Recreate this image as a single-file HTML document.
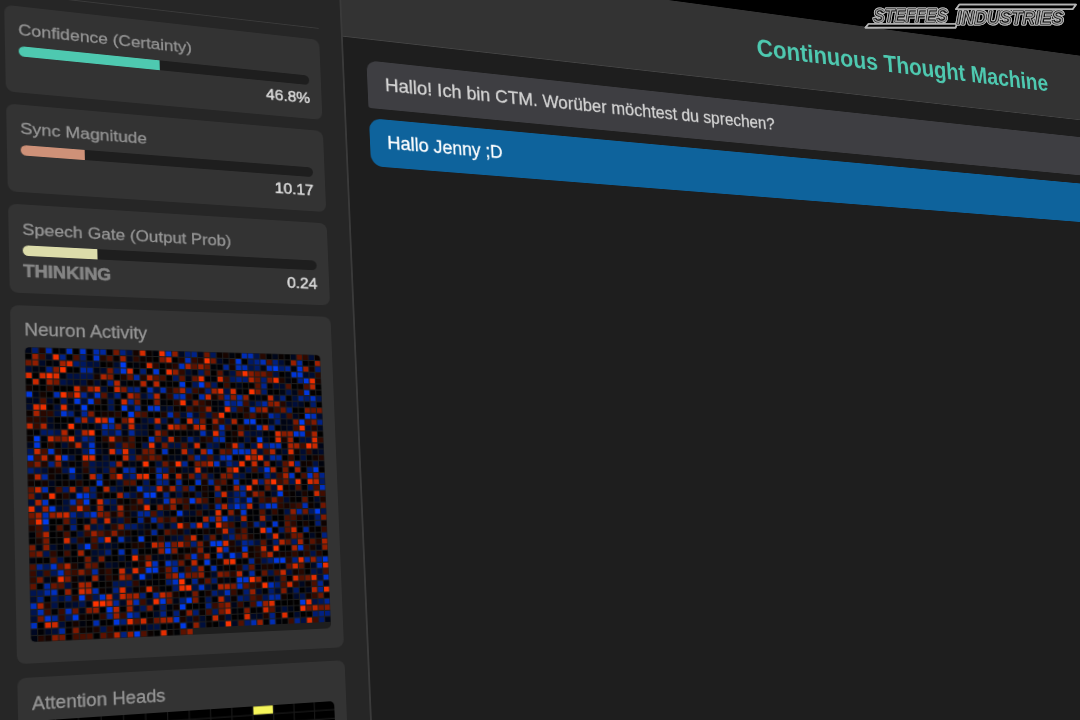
<!DOCTYPE html>
<html><head><meta charset="utf-8"><style>
html,body{margin:0;padding:0;width:1080px;height:720px;overflow:hidden;background:#000}
#scr{filter:blur(0.4px);position:absolute;left:0;top:0;width:1560px;height:960px;transform-origin:0 0;transform:matrix3d(1.05082415,0.11849124,0,0.000260192014,0.0177969558,0.926562031,0,-6.33659565e-05,0,0,1,0,-31.2582552,-94.4912077,0,1);background:#1e1e1e;font-family:"Liberation Sans",sans-serif;overflow:hidden}
#scr div{position:absolute}
.card{left:31.9px;width:326.2px;background:#333333;border-radius:8px}
.lbl{font-size:17.4px;color:#969696;-webkit-text-stroke:0.3px #969696;line-height:0;white-space:nowrap}
.val{font-size:17px;-webkit-text-stroke:0.55px #d8d8d8;color:#d8d8d8;line-height:0;white-space:nowrap;text-align:right}
.track{width:300px;height:11px;border-radius:5.5px;background:#1e1e1e;overflow:hidden}
.fill{position:absolute;left:0;top:0;height:11px}
</style></head><body>
<div id="scr">
<div id="side" style="left:0;top:0;width:383.3px;height:960px;background:#262626"></div>
<div style="left:383.3px;top:0;width:2px;height:960px;background:#3a3a3a"></div>
<div id="hdr" style="left:385.3px;top:0;width:1200px;height:94.5px;background:#333333"></div>
<div style="left:385.3px;top:94.5px;width:1200px;height:1.4px;background:#444444"></div>
<div style="left:918.9px;top:47.5px;font-size:32.8px;font-weight:bold;color:#4ec9b0;line-height:0;white-space:nowrap">Continuous Thought Machine</div>
<div style="left:31.9px;top:88.8px;width:326.2px;height:1.5px;background:#3a3a3a"></div>
<div style="left:410.8px;top:121.3px;width:1400px;height:55.3px;background:#3e3e42;border-radius:12px 12px 12px 3px"></div>
<div style="left:431.2px;top:148.4px;font-size:21.75px;color:#d4d4d4;-webkit-text-stroke:0.35px #d4d4d4;line-height:0;white-space:nowrap">Hallo! Ich bin CTM. Worüber möchtest du sprechen?</div>
<div style="left:410.8px;top:188.8px;width:1400px;height:56.1px;background:#0e639c;border-radius:14px 14px 3px 14px"></div>
<div style="left:430.9px;top:216.1px;font-size:21.2px;color:#ffffff;-webkit-text-stroke:0.35px #ffffff;line-height:0;white-space:nowrap">Hallo Jenny ;D</div>
<div class="card" style="top:102.8px;height:93.3px"></div>
<div class="lbl" style="left:45.0px;top:128.3px;font-size:17.4px">Confidence (Certainty)</div>
<div class="track" style="left:45.0px;top:145.8px"><div class="fill" style="width:140.4px;background:#4ec9b0"></div></div>
<div class="val" style="right:1215.0px;top:172.7px">46.8%</div>
<div class="card" style="top:208.9px;height:93.3px"></div>
<div class="lbl" style="left:45.0px;top:234.4px;font-size:17.4px">Sync Magnitude</div>
<div class="track" style="left:45.0px;top:251.9px"><div class="fill" style="width:62.1px;background:#ce9178"></div></div>
<div class="val" style="right:1215.0px;top:278.8px">10.17</div>
<div class="card" style="top:315.0px;height:93.3px"></div>
<div class="lbl" style="left:45.0px;top:340.6px;font-size:17.15px">Speech Gate (Output Prob)</div>
<div class="track" style="left:45.0px;top:358.0px"><div class="fill" style="width:72.0px;background:#dcdcaa"></div></div>
<div class="val" style="right:1215.0px;top:384.9px">0.24</div><div style="left:45.0px;top:384.9px;font-size:17.6px;font-weight:bold;color:#858585;-webkit-text-stroke:0.6px #858585;line-height:0;white-space:nowrap">THINKING</div>
<div class="card" style="top:421.0px;height:363.9px"></div>
<div class="lbl" style="left:45.0px;top:446.3px;font-size:17.9px">Neuron Activity</div>
<div style="left:45.0px;top:464.4px;width:300px;height:300px;background:#1e1e1e;border-radius:5px;overflow:hidden"><svg width="300" height="300" viewBox="0 0 300 300" style="position:absolute;left:0;top:0"><rect x="0.55" y="0.55" width="5.42" height="5.42" fill="#000619"/><rect x="7.07" y="0.55" width="5.42" height="5.42" fill="#001c70"/><rect x="13.59" y="0.55" width="5.42" height="5.42" fill="#1d0500"/><rect x="20.12" y="0.55" width="5.42" height="5.42" fill="#002bae"/><rect x="26.64" y="0.55" width="5.42" height="5.42" fill="#020000"/><rect x="33.16" y="0.55" width="5.42" height="5.42" fill="#00030d"/><rect x="39.68" y="0.55" width="5.42" height="5.42" fill="#002fbb"/><rect x="46.20" y="0.55" width="5.42" height="5.42" fill="#000000"/><rect x="52.72" y="0.55" width="5.42" height="5.42" fill="#0033ce"/><rect x="59.25" y="0.55" width="5.42" height="5.42" fill="#000002"/><rect x="65.77" y="0.55" width="5.42" height="5.42" fill="#002cb0"/><rect x="72.29" y="0.55" width="5.42" height="5.42" fill="#00279f"/><rect x="78.81" y="0.55" width="5.42" height="5.42" fill="#000003"/><rect x="85.33" y="0.55" width="5.42" height="5.42" fill="#781800"/><rect x="91.85" y="0.55" width="5.42" height="5.42" fill="#002184"/><rect x="98.38" y="0.55" width="5.42" height="5.42" fill="#001144"/><rect x="104.90" y="0.55" width="5.42" height="5.42" fill="#150400"/><rect x="111.42" y="0.55" width="5.42" height="5.42" fill="#d72b00"/><rect x="117.94" y="0.55" width="5.42" height="5.42" fill="#090100"/><rect x="124.46" y="0.55" width="5.42" height="5.42" fill="#000107"/><rect x="130.98" y="0.55" width="5.42" height="5.42" fill="#f13000"/><rect x="137.51" y="0.55" width="5.42" height="5.42" fill="#0031c6"/><rect x="144.03" y="0.55" width="5.42" height="5.42" fill="#8e1c00"/><rect x="150.55" y="0.55" width="5.42" height="5.42" fill="#000925"/><rect x="157.07" y="0.55" width="5.42" height="5.42" fill="#001d75"/><rect x="163.59" y="0.55" width="5.42" height="5.42" fill="#002289"/><rect x="170.12" y="0.55" width="5.42" height="5.42" fill="#00071e"/><rect x="176.64" y="0.55" width="5.42" height="5.42" fill="#711600"/><rect x="183.16" y="0.55" width="5.42" height="5.42" fill="#00175c"/><rect x="189.68" y="0.55" width="5.42" height="5.42" fill="#0a0200"/><rect x="196.20" y="0.55" width="5.42" height="5.42" fill="#190500"/><rect x="202.72" y="0.55" width="5.42" height="5.42" fill="#00030c"/><rect x="209.25" y="0.55" width="5.42" height="5.42" fill="#040000"/><rect x="215.77" y="0.55" width="5.42" height="5.42" fill="#002db7"/><rect x="222.29" y="0.55" width="5.42" height="5.42" fill="#002eba"/><rect x="228.81" y="0.55" width="5.42" height="5.42" fill="#00134d"/><rect x="235.33" y="0.55" width="5.42" height="5.42" fill="#280800"/><rect x="241.85" y="0.55" width="5.42" height="5.42" fill="#000003"/><rect x="248.38" y="0.55" width="5.42" height="5.42" fill="#00071c"/><rect x="254.90" y="0.55" width="5.42" height="5.42" fill="#0a0200"/><rect x="261.42" y="0.55" width="5.42" height="5.42" fill="#000001"/><rect x="267.94" y="0.55" width="5.42" height="5.42" fill="#000821"/><rect x="274.46" y="0.55" width="5.42" height="5.42" fill="#631300"/><rect x="280.98" y="0.55" width="5.42" height="5.42" fill="#300900"/><rect x="287.51" y="0.55" width="5.42" height="5.42" fill="#000e39"/><rect x="294.03" y="0.55" width="5.42" height="5.42" fill="#080100"/><rect x="0.55" y="7.07" width="5.42" height="5.42" fill="#010000"/><rect x="7.07" y="7.07" width="5.42" height="5.42" fill="#9b1f00"/><rect x="13.59" y="7.07" width="5.42" height="5.42" fill="#3e0c00"/><rect x="20.12" y="7.07" width="5.42" height="5.42" fill="#000926"/><rect x="26.64" y="7.07" width="5.42" height="5.42" fill="#f53100"/><rect x="33.16" y="7.07" width="5.42" height="5.42" fill="#002288"/><rect x="39.68" y="7.07" width="5.42" height="5.42" fill="#000104"/><rect x="46.20" y="7.07" width="5.42" height="5.42" fill="#4d0f00"/><rect x="52.72" y="7.07" width="5.42" height="5.42" fill="#001c70"/><rect x="59.25" y="7.07" width="5.42" height="5.42" fill="#000000"/><rect x="65.77" y="7.07" width="5.42" height="5.42" fill="#0033cd"/><rect x="72.29" y="7.07" width="5.42" height="5.42" fill="#230700"/><rect x="78.81" y="7.07" width="5.42" height="5.42" fill="#511000"/><rect x="85.33" y="7.07" width="5.42" height="5.42" fill="#080100"/><rect x="91.85" y="7.07" width="5.42" height="5.42" fill="#9b1f00"/><rect x="98.38" y="7.07" width="5.42" height="5.42" fill="#00071c"/><rect x="104.90" y="7.07" width="5.42" height="5.42" fill="#2e0900"/><rect x="111.42" y="7.07" width="5.42" height="5.42" fill="#0c0200"/><rect x="117.94" y="7.07" width="5.42" height="5.42" fill="#090100"/><rect x="124.46" y="7.07" width="5.42" height="5.42" fill="#000000"/><rect x="130.98" y="7.07" width="5.42" height="5.42" fill="#811900"/><rect x="137.51" y="7.07" width="5.42" height="5.42" fill="#d42a00"/><rect x="144.03" y="7.07" width="5.42" height="5.42" fill="#000000"/><rect x="150.55" y="7.07" width="5.42" height="5.42" fill="#220600"/><rect x="157.07" y="7.07" width="5.42" height="5.42" fill="#002eb9"/><rect x="163.59" y="7.07" width="5.42" height="5.42" fill="#310900"/><rect x="170.12" y="7.07" width="5.42" height="5.42" fill="#1c0500"/><rect x="176.64" y="7.07" width="5.42" height="5.42" fill="#ff3300"/><rect x="183.16" y="7.07" width="5.42" height="5.42" fill="#751700"/><rect x="189.68" y="7.07" width="5.42" height="5.42" fill="#000927"/><rect x="196.20" y="7.07" width="5.42" height="5.42" fill="#000209"/><rect x="202.72" y="7.07" width="5.42" height="5.42" fill="#240700"/><rect x="209.25" y="7.07" width="5.42" height="5.42" fill="#0037dd"/><rect x="215.77" y="7.07" width="5.42" height="5.42" fill="#000000"/><rect x="222.29" y="7.07" width="5.42" height="5.42" fill="#001965"/><rect x="228.81" y="7.07" width="5.42" height="5.42" fill="#002289"/><rect x="235.33" y="7.07" width="5.42" height="5.42" fill="#002eba"/><rect x="241.85" y="7.07" width="5.42" height="5.42" fill="#531000"/><rect x="248.38" y="7.07" width="5.42" height="5.42" fill="#002080"/><rect x="254.90" y="7.07" width="5.42" height="5.42" fill="#000d37"/><rect x="261.42" y="7.07" width="5.42" height="5.42" fill="#000208"/><rect x="267.94" y="7.07" width="5.42" height="5.42" fill="#981e00"/><rect x="274.46" y="7.07" width="5.42" height="5.42" fill="#002aa7"/><rect x="280.98" y="7.07" width="5.42" height="5.42" fill="#000001"/><rect x="287.51" y="7.07" width="5.42" height="5.42" fill="#040000"/><rect x="294.03" y="7.07" width="5.42" height="5.42" fill="#a12000"/><rect x="0.55" y="13.59" width="5.42" height="5.42" fill="#731700"/><rect x="7.07" y="13.59" width="5.42" height="5.42" fill="#921d00"/><rect x="13.59" y="13.59" width="5.42" height="5.42" fill="#000a29"/><rect x="20.12" y="13.59" width="5.42" height="5.42" fill="#000104"/><rect x="26.64" y="13.59" width="5.42" height="5.42" fill="#00030f"/><rect x="33.16" y="13.59" width="5.42" height="5.42" fill="#a22000"/><rect x="39.68" y="13.59" width="5.42" height="5.42" fill="#e02c00"/><rect x="46.20" y="13.59" width="5.42" height="5.42" fill="#001c70"/><rect x="52.72" y="13.59" width="5.42" height="5.42" fill="#00185f"/><rect x="59.25" y="13.59" width="5.42" height="5.42" fill="#000f3f"/><rect x="65.77" y="13.59" width="5.42" height="5.42" fill="#000f3e"/><rect x="72.29" y="13.59" width="5.42" height="5.42" fill="#000000"/><rect x="78.81" y="13.59" width="5.42" height="5.42" fill="#0b0200"/><rect x="85.33" y="13.59" width="5.42" height="5.42" fill="#000c30"/><rect x="91.85" y="13.59" width="5.42" height="5.42" fill="#003cf0"/><rect x="98.38" y="13.59" width="5.42" height="5.42" fill="#000104"/><rect x="104.90" y="13.59" width="5.42" height="5.42" fill="#00030c"/><rect x="111.42" y="13.59" width="5.42" height="5.42" fill="#070100"/><rect x="117.94" y="13.59" width="5.42" height="5.42" fill="#dc2c00"/><rect x="124.46" y="13.59" width="5.42" height="5.42" fill="#2c0800"/><rect x="130.98" y="13.59" width="5.42" height="5.42" fill="#000000"/><rect x="137.51" y="13.59" width="5.42" height="5.42" fill="#130300"/><rect x="144.03" y="13.59" width="5.42" height="5.42" fill="#270700"/><rect x="150.55" y="13.59" width="5.42" height="5.42" fill="#0030bf"/><rect x="157.07" y="13.59" width="5.42" height="5.42" fill="#ae2200"/><rect x="163.59" y="13.59" width="5.42" height="5.42" fill="#5a1200"/><rect x="170.12" y="13.59" width="5.42" height="5.42" fill="#9a1e00"/><rect x="176.64" y="13.59" width="5.42" height="5.42" fill="#651400"/><rect x="183.16" y="13.59" width="5.42" height="5.42" fill="#000208"/><rect x="189.68" y="13.59" width="5.42" height="5.42" fill="#000107"/><rect x="196.20" y="13.59" width="5.42" height="5.42" fill="#002594"/><rect x="202.72" y="13.59" width="5.42" height="5.42" fill="#180400"/><rect x="209.25" y="13.59" width="5.42" height="5.42" fill="#002eb7"/><rect x="215.77" y="13.59" width="5.42" height="5.42" fill="#002cb3"/><rect x="222.29" y="13.59" width="5.42" height="5.42" fill="#00134c"/><rect x="228.81" y="13.59" width="5.42" height="5.42" fill="#001a69"/><rect x="235.33" y="13.59" width="5.42" height="5.42" fill="#000514"/><rect x="241.85" y="13.59" width="5.42" height="5.42" fill="#0030c0"/><rect x="248.38" y="13.59" width="5.42" height="5.42" fill="#003df4"/><rect x="254.90" y="13.59" width="5.42" height="5.42" fill="#001c70"/><rect x="261.42" y="13.59" width="5.42" height="5.42" fill="#002596"/><rect x="267.94" y="13.59" width="5.42" height="5.42" fill="#00030e"/><rect x="274.46" y="13.59" width="5.42" height="5.42" fill="#0036da"/><rect x="280.98" y="13.59" width="5.42" height="5.42" fill="#9a1e00"/><rect x="287.51" y="13.59" width="5.42" height="5.42" fill="#120300"/><rect x="294.03" y="13.59" width="5.42" height="5.42" fill="#001c72"/><rect x="0.55" y="20.12" width="5.42" height="5.42" fill="#000d35"/><rect x="7.07" y="20.12" width="5.42" height="5.42" fill="#000412"/><rect x="13.59" y="20.12" width="5.42" height="5.42" fill="#00030e"/><rect x="20.12" y="20.12" width="5.42" height="5.42" fill="#002185"/><rect x="26.64" y="20.12" width="5.42" height="5.42" fill="#871b00"/><rect x="33.16" y="20.12" width="5.42" height="5.42" fill="#ff3300"/><rect x="39.68" y="20.12" width="5.42" height="5.42" fill="#000000"/><rect x="46.20" y="20.12" width="5.42" height="5.42" fill="#000000"/><rect x="52.72" y="20.12" width="5.42" height="5.42" fill="#0028a3"/><rect x="59.25" y="20.12" width="5.42" height="5.42" fill="#002595"/><rect x="65.77" y="20.12" width="5.42" height="5.42" fill="#000413"/><rect x="72.29" y="20.12" width="5.42" height="5.42" fill="#000b2f"/><rect x="78.81" y="20.12" width="5.42" height="5.42" fill="#791800"/><rect x="85.33" y="20.12" width="5.42" height="5.42" fill="#001a69"/><rect x="91.85" y="20.12" width="5.42" height="5.42" fill="#0037dc"/><rect x="98.38" y="20.12" width="5.42" height="5.42" fill="#da2b00"/><rect x="104.90" y="20.12" width="5.42" height="5.42" fill="#010000"/><rect x="111.42" y="20.12" width="5.42" height="5.42" fill="#001d73"/><rect x="117.94" y="20.12" width="5.42" height="5.42" fill="#030000"/><rect x="124.46" y="20.12" width="5.42" height="5.42" fill="#0036d8"/><rect x="130.98" y="20.12" width="5.42" height="5.42" fill="#010000"/><rect x="137.51" y="20.12" width="5.42" height="5.42" fill="#f33000"/><rect x="144.03" y="20.12" width="5.42" height="5.42" fill="#921d00"/><rect x="150.55" y="20.12" width="5.42" height="5.42" fill="#2f0900"/><rect x="157.07" y="20.12" width="5.42" height="5.42" fill="#000c31"/><rect x="163.59" y="20.12" width="5.42" height="5.42" fill="#00030d"/><rect x="170.12" y="20.12" width="5.42" height="5.42" fill="#001965"/><rect x="176.64" y="20.12" width="5.42" height="5.42" fill="#551100"/><rect x="183.16" y="20.12" width="5.42" height="5.42" fill="#020000"/><rect x="189.68" y="20.12" width="5.42" height="5.42" fill="#5a1200"/><rect x="196.20" y="20.12" width="5.42" height="5.42" fill="#000517"/><rect x="202.72" y="20.12" width="5.42" height="5.42" fill="#001144"/><rect x="209.25" y="20.12" width="5.42" height="5.42" fill="#6e1600"/><rect x="215.77" y="20.12" width="5.42" height="5.42" fill="#fa3200"/><rect x="222.29" y="20.12" width="5.42" height="5.42" fill="#8a1b00"/><rect x="228.81" y="20.12" width="5.42" height="5.42" fill="#6a1500"/><rect x="235.33" y="20.12" width="5.42" height="5.42" fill="#721600"/><rect x="241.85" y="20.12" width="5.42" height="5.42" fill="#440d00"/><rect x="248.38" y="20.12" width="5.42" height="5.42" fill="#001042"/><rect x="254.90" y="20.12" width="5.42" height="5.42" fill="#010000"/><rect x="261.42" y="20.12" width="5.42" height="5.42" fill="#000410"/><rect x="267.94" y="20.12" width="5.42" height="5.42" fill="#0035d7"/><rect x="274.46" y="20.12" width="5.42" height="5.42" fill="#0036d8"/><rect x="280.98" y="20.12" width="5.42" height="5.42" fill="#000a29"/><rect x="287.51" y="20.12" width="5.42" height="5.42" fill="#000c32"/><rect x="294.03" y="20.12" width="5.42" height="5.42" fill="#2d0900"/><rect x="0.55" y="26.64" width="5.42" height="5.42" fill="#df2c00"/><rect x="7.07" y="26.64" width="5.42" height="5.42" fill="#000001"/><rect x="13.59" y="26.64" width="5.42" height="5.42" fill="#ce2900"/><rect x="20.12" y="26.64" width="5.42" height="5.42" fill="#fd3200"/><rect x="26.64" y="26.64" width="5.42" height="5.42" fill="#de2c00"/><rect x="33.16" y="26.64" width="5.42" height="5.42" fill="#00030d"/><rect x="39.68" y="26.64" width="5.42" height="5.42" fill="#001145"/><rect x="46.20" y="26.64" width="5.42" height="5.42" fill="#001042"/><rect x="52.72" y="26.64" width="5.42" height="5.42" fill="#001453"/><rect x="59.25" y="26.64" width="5.42" height="5.42" fill="#00134e"/><rect x="65.77" y="26.64" width="5.42" height="5.42" fill="#140400"/><rect x="72.29" y="26.64" width="5.42" height="5.42" fill="#af2300"/><rect x="78.81" y="26.64" width="5.42" height="5.42" fill="#811900"/><rect x="85.33" y="26.64" width="5.42" height="5.42" fill="#000000"/><rect x="91.85" y="26.64" width="5.42" height="5.42" fill="#1e0600"/><rect x="98.38" y="26.64" width="5.42" height="5.42" fill="#661400"/><rect x="104.90" y="26.64" width="5.42" height="5.42" fill="#0029a4"/><rect x="111.42" y="26.64" width="5.42" height="5.42" fill="#210600"/><rect x="117.94" y="26.64" width="5.42" height="5.42" fill="#b62400"/><rect x="124.46" y="26.64" width="5.42" height="5.42" fill="#5b1200"/><rect x="130.98" y="26.64" width="5.42" height="5.42" fill="#490e00"/><rect x="137.51" y="26.64" width="5.42" height="5.42" fill="#000000"/><rect x="144.03" y="26.64" width="5.42" height="5.42" fill="#00175e"/><rect x="150.55" y="26.64" width="5.42" height="5.42" fill="#601300"/><rect x="157.07" y="26.64" width="5.42" height="5.42" fill="#000516"/><rect x="163.59" y="26.64" width="5.42" height="5.42" fill="#671400"/><rect x="170.12" y="26.64" width="5.42" height="5.42" fill="#ed2f00"/><rect x="176.64" y="26.64" width="5.42" height="5.42" fill="#000107"/><rect x="183.16" y="26.64" width="5.42" height="5.42" fill="#000106"/><rect x="189.68" y="26.64" width="5.42" height="5.42" fill="#d62a00"/><rect x="196.20" y="26.64" width="5.42" height="5.42" fill="#3c0c00"/><rect x="202.72" y="26.64" width="5.42" height="5.42" fill="#001963"/><rect x="209.25" y="26.64" width="5.42" height="5.42" fill="#002082"/><rect x="215.77" y="26.64" width="5.42" height="5.42" fill="#001c70"/><rect x="222.29" y="26.64" width="5.42" height="5.42" fill="#b22300"/><rect x="228.81" y="26.64" width="5.42" height="5.42" fill="#6a1500"/><rect x="235.33" y="26.64" width="5.42" height="5.42" fill="#001d74"/><rect x="241.85" y="26.64" width="5.42" height="5.42" fill="#781800"/><rect x="248.38" y="26.64" width="5.42" height="5.42" fill="#f53100"/><rect x="254.90" y="26.64" width="5.42" height="5.42" fill="#1f0600"/><rect x="261.42" y="26.64" width="5.42" height="5.42" fill="#000411"/><rect x="267.94" y="26.64" width="5.42" height="5.42" fill="#040000"/><rect x="274.46" y="26.64" width="5.42" height="5.42" fill="#001f7f"/><rect x="280.98" y="26.64" width="5.42" height="5.42" fill="#0039e5"/><rect x="287.51" y="26.64" width="5.42" height="5.42" fill="#ec2f00"/><rect x="294.03" y="26.64" width="5.42" height="5.42" fill="#1d0500"/><rect x="0.55" y="33.16" width="5.42" height="5.42" fill="#010000"/><rect x="7.07" y="33.16" width="5.42" height="5.42" fill="#cb2800"/><rect x="13.59" y="33.16" width="5.42" height="5.42" fill="#000002"/><rect x="20.12" y="33.16" width="5.42" height="5.42" fill="#981e00"/><rect x="26.64" y="33.16" width="5.42" height="5.42" fill="#771700"/><rect x="33.16" y="33.16" width="5.42" height="5.42" fill="#00124a"/><rect x="39.68" y="33.16" width="5.42" height="5.42" fill="#000d35"/><rect x="46.20" y="33.16" width="5.42" height="5.42" fill="#000924"/><rect x="52.72" y="33.16" width="5.42" height="5.42" fill="#000e3b"/><rect x="59.25" y="33.16" width="5.42" height="5.42" fill="#0b0200"/><rect x="65.77" y="33.16" width="5.42" height="5.42" fill="#000c32"/><rect x="72.29" y="33.16" width="5.42" height="5.42" fill="#000104"/><rect x="78.81" y="33.16" width="5.42" height="5.42" fill="#001f7f"/><rect x="85.33" y="33.16" width="5.42" height="5.42" fill="#b72400"/><rect x="91.85" y="33.16" width="5.42" height="5.42" fill="#000410"/><rect x="98.38" y="33.16" width="5.42" height="5.42" fill="#000000"/><rect x="104.90" y="33.16" width="5.42" height="5.42" fill="#0a0200"/><rect x="111.42" y="33.16" width="5.42" height="5.42" fill="#b22300"/><rect x="117.94" y="33.16" width="5.42" height="5.42" fill="#000104"/><rect x="124.46" y="33.16" width="5.42" height="5.42" fill="#bd2500"/><rect x="130.98" y="33.16" width="5.42" height="5.42" fill="#000000"/><rect x="137.51" y="33.16" width="5.42" height="5.42" fill="#020000"/><rect x="144.03" y="33.16" width="5.42" height="5.42" fill="#010000"/><rect x="150.55" y="33.16" width="5.42" height="5.42" fill="#0038e1"/><rect x="157.07" y="33.16" width="5.42" height="5.42" fill="#000002"/><rect x="163.59" y="33.16" width="5.42" height="5.42" fill="#00165b"/><rect x="170.12" y="33.16" width="5.42" height="5.42" fill="#003cf0"/><rect x="176.64" y="33.16" width="5.42" height="5.42" fill="#661400"/><rect x="183.16" y="33.16" width="5.42" height="5.42" fill="#001862"/><rect x="189.68" y="33.16" width="5.42" height="5.42" fill="#000000"/><rect x="196.20" y="33.16" width="5.42" height="5.42" fill="#3c0c00"/><rect x="202.72" y="33.16" width="5.42" height="5.42" fill="#050100"/><rect x="209.25" y="33.16" width="5.42" height="5.42" fill="#000618"/><rect x="215.77" y="33.16" width="5.42" height="5.42" fill="#010000"/><rect x="222.29" y="33.16" width="5.42" height="5.42" fill="#050100"/><rect x="228.81" y="33.16" width="5.42" height="5.42" fill="#5d1200"/><rect x="235.33" y="33.16" width="5.42" height="5.42" fill="#002492"/><rect x="241.85" y="33.16" width="5.42" height="5.42" fill="#060100"/><rect x="248.38" y="33.16" width="5.42" height="5.42" fill="#000d37"/><rect x="254.90" y="33.16" width="5.42" height="5.42" fill="#000a2a"/><rect x="261.42" y="33.16" width="5.42" height="5.42" fill="#561100"/><rect x="267.94" y="33.16" width="5.42" height="5.42" fill="#000000"/><rect x="274.46" y="33.16" width="5.42" height="5.42" fill="#060100"/><rect x="280.98" y="33.16" width="5.42" height="5.42" fill="#4f0f00"/><rect x="287.51" y="33.16" width="5.42" height="5.42" fill="#b92500"/><rect x="294.03" y="33.16" width="5.42" height="5.42" fill="#000001"/><rect x="0.55" y="39.68" width="5.42" height="5.42" fill="#110300"/><rect x="7.07" y="39.68" width="5.42" height="5.42" fill="#000000"/><rect x="13.59" y="39.68" width="5.42" height="5.42" fill="#000000"/><rect x="20.12" y="39.68" width="5.42" height="5.42" fill="#2d0900"/><rect x="26.64" y="39.68" width="5.42" height="5.42" fill="#000001"/><rect x="33.16" y="39.68" width="5.42" height="5.42" fill="#020000"/><rect x="39.68" y="39.68" width="5.42" height="5.42" fill="#000000"/><rect x="46.20" y="39.68" width="5.42" height="5.42" fill="#d22a00"/><rect x="52.72" y="39.68" width="5.42" height="5.42" fill="#300900"/><rect x="59.25" y="39.68" width="5.42" height="5.42" fill="#9c1f00"/><rect x="65.77" y="39.68" width="5.42" height="5.42" fill="#d22a00"/><rect x="72.29" y="39.68" width="5.42" height="5.42" fill="#000c32"/><rect x="78.81" y="39.68" width="5.42" height="5.42" fill="#060100"/><rect x="85.33" y="39.68" width="5.42" height="5.42" fill="#d32a00"/><rect x="91.85" y="39.68" width="5.42" height="5.42" fill="#811900"/><rect x="98.38" y="39.68" width="5.42" height="5.42" fill="#001e7a"/><rect x="104.90" y="39.68" width="5.42" height="5.42" fill="#002186"/><rect x="111.42" y="39.68" width="5.42" height="5.42" fill="#000001"/><rect x="117.94" y="39.68" width="5.42" height="5.42" fill="#002bae"/><rect x="124.46" y="39.68" width="5.42" height="5.42" fill="#000e3b"/><rect x="130.98" y="39.68" width="5.42" height="5.42" fill="#002bae"/><rect x="137.51" y="39.68" width="5.42" height="5.42" fill="#240700"/><rect x="144.03" y="39.68" width="5.42" height="5.42" fill="#5c1200"/><rect x="150.55" y="39.68" width="5.42" height="5.42" fill="#ac2200"/><rect x="157.07" y="39.68" width="5.42" height="5.42" fill="#001b6e"/><rect x="163.59" y="39.68" width="5.42" height="5.42" fill="#380b00"/><rect x="170.12" y="39.68" width="5.42" height="5.42" fill="#200600"/><rect x="176.64" y="39.68" width="5.42" height="5.42" fill="#001d76"/><rect x="183.16" y="39.68" width="5.42" height="5.42" fill="#a12000"/><rect x="189.68" y="39.68" width="5.42" height="5.42" fill="#e92e00"/><rect x="196.20" y="39.68" width="5.42" height="5.42" fill="#001146"/><rect x="202.72" y="39.68" width="5.42" height="5.42" fill="#db2b00"/><rect x="209.25" y="39.68" width="5.42" height="5.42" fill="#000107"/><rect x="215.77" y="39.68" width="5.42" height="5.42" fill="#000000"/><rect x="222.29" y="39.68" width="5.42" height="5.42" fill="#fe3200"/><rect x="228.81" y="39.68" width="5.42" height="5.42" fill="#7c1800"/><rect x="235.33" y="39.68" width="5.42" height="5.42" fill="#001a69"/><rect x="241.85" y="39.68" width="5.42" height="5.42" fill="#000002"/><rect x="248.38" y="39.68" width="5.42" height="5.42" fill="#000000"/><rect x="254.90" y="39.68" width="5.42" height="5.42" fill="#000514"/><rect x="261.42" y="39.68" width="5.42" height="5.42" fill="#001553"/><rect x="267.94" y="39.68" width="5.42" height="5.42" fill="#00061a"/><rect x="274.46" y="39.68" width="5.42" height="5.42" fill="#3b0b00"/><rect x="280.98" y="39.68" width="5.42" height="5.42" fill="#0038e0"/><rect x="287.51" y="39.68" width="5.42" height="5.42" fill="#050100"/><rect x="294.03" y="39.68" width="5.42" height="5.42" fill="#000001"/><rect x="0.55" y="46.20" width="5.42" height="5.42" fill="#0038e1"/><rect x="7.07" y="46.20" width="5.42" height="5.42" fill="#000516"/><rect x="13.59" y="46.20" width="5.42" height="5.42" fill="#140400"/><rect x="20.12" y="46.20" width="5.42" height="5.42" fill="#000000"/><rect x="26.64" y="46.20" width="5.42" height="5.42" fill="#002db5"/><rect x="33.16" y="46.20" width="5.42" height="5.42" fill="#fa3200"/><rect x="39.68" y="46.20" width="5.42" height="5.42" fill="#5f1300"/><rect x="46.20" y="46.20" width="5.42" height="5.42" fill="#ed2f00"/><rect x="52.72" y="46.20" width="5.42" height="5.42" fill="#002593"/><rect x="59.25" y="46.20" width="5.42" height="5.42" fill="#000b2f"/><rect x="65.77" y="46.20" width="5.42" height="5.42" fill="#0033cc"/><rect x="72.29" y="46.20" width="5.42" height="5.42" fill="#591100"/><rect x="78.81" y="46.20" width="5.42" height="5.42" fill="#000b2d"/><rect x="85.33" y="46.20" width="5.42" height="5.42" fill="#002080"/><rect x="91.85" y="46.20" width="5.42" height="5.42" fill="#000003"/><rect x="98.38" y="46.20" width="5.42" height="5.42" fill="#b82400"/><rect x="104.90" y="46.20" width="5.42" height="5.42" fill="#731700"/><rect x="111.42" y="46.20" width="5.42" height="5.42" fill="#000c32"/><rect x="117.94" y="46.20" width="5.42" height="5.42" fill="#001c71"/><rect x="124.46" y="46.20" width="5.42" height="5.42" fill="#be2600"/><rect x="130.98" y="46.20" width="5.42" height="5.42" fill="#070100"/><rect x="137.51" y="46.20" width="5.42" height="5.42" fill="#310900"/><rect x="144.03" y="46.20" width="5.42" height="5.42" fill="#0028a0"/><rect x="150.55" y="46.20" width="5.42" height="5.42" fill="#002fbc"/><rect x="157.07" y="46.20" width="5.42" height="5.42" fill="#2b0800"/><rect x="163.59" y="46.20" width="5.42" height="5.42" fill="#000003"/><rect x="170.12" y="46.20" width="5.42" height="5.42" fill="#002bae"/><rect x="176.64" y="46.20" width="5.42" height="5.42" fill="#cf2900"/><rect x="183.16" y="46.20" width="5.42" height="5.42" fill="#180400"/><rect x="189.68" y="46.20" width="5.42" height="5.42" fill="#671400"/><rect x="196.20" y="46.20" width="5.42" height="5.42" fill="#0029a4"/><rect x="202.72" y="46.20" width="5.42" height="5.42" fill="#8d1c00"/><rect x="209.25" y="46.20" width="5.42" height="5.42" fill="#002db3"/><rect x="215.77" y="46.20" width="5.42" height="5.42" fill="#911d00"/><rect x="222.29" y="46.20" width="5.42" height="5.42" fill="#000001"/><rect x="228.81" y="46.20" width="5.42" height="5.42" fill="#000514"/><rect x="235.33" y="46.20" width="5.42" height="5.42" fill="#040000"/><rect x="241.85" y="46.20" width="5.42" height="5.42" fill="#c52700"/><rect x="248.38" y="46.20" width="5.42" height="5.42" fill="#000b2e"/><rect x="254.90" y="46.20" width="5.42" height="5.42" fill="#002080"/><rect x="261.42" y="46.20" width="5.42" height="5.42" fill="#010000"/><rect x="267.94" y="46.20" width="5.42" height="5.42" fill="#000f3c"/><rect x="274.46" y="46.20" width="5.42" height="5.42" fill="#00248f"/><rect x="280.98" y="46.20" width="5.42" height="5.42" fill="#001a69"/><rect x="287.51" y="46.20" width="5.42" height="5.42" fill="#0030c2"/><rect x="294.03" y="46.20" width="5.42" height="5.42" fill="#001450"/><rect x="0.55" y="52.72" width="5.42" height="5.42" fill="#00071d"/><rect x="7.07" y="52.72" width="5.42" height="5.42" fill="#00071f"/><rect x="13.59" y="52.72" width="5.42" height="5.42" fill="#4e0f00"/><rect x="20.12" y="52.72" width="5.42" height="5.42" fill="#000925"/><rect x="26.64" y="52.72" width="5.42" height="5.42" fill="#000000"/><rect x="33.16" y="52.72" width="5.42" height="5.42" fill="#00175e"/><rect x="39.68" y="52.72" width="5.42" height="5.42" fill="#000412"/><rect x="46.20" y="52.72" width="5.42" height="5.42" fill="#0038e1"/><rect x="52.72" y="52.72" width="5.42" height="5.42" fill="#000d36"/><rect x="59.25" y="52.72" width="5.42" height="5.42" fill="#0039e4"/><rect x="65.77" y="52.72" width="5.42" height="5.42" fill="#400c00"/><rect x="72.29" y="52.72" width="5.42" height="5.42" fill="#040000"/><rect x="78.81" y="52.72" width="5.42" height="5.42" fill="#001557"/><rect x="85.33" y="52.72" width="5.42" height="5.42" fill="#000000"/><rect x="91.85" y="52.72" width="5.42" height="5.42" fill="#cc2800"/><rect x="98.38" y="52.72" width="5.42" height="5.42" fill="#002492"/><rect x="104.90" y="52.72" width="5.42" height="5.42" fill="#731700"/><rect x="111.42" y="52.72" width="5.42" height="5.42" fill="#000002"/><rect x="117.94" y="52.72" width="5.42" height="5.42" fill="#000000"/><rect x="124.46" y="52.72" width="5.42" height="5.42" fill="#7d1900"/><rect x="130.98" y="52.72" width="5.42" height="5.42" fill="#000208"/><rect x="137.51" y="52.72" width="5.42" height="5.42" fill="#000000"/><rect x="144.03" y="52.72" width="5.42" height="5.42" fill="#2b0800"/><rect x="150.55" y="52.72" width="5.42" height="5.42" fill="#f73100"/><rect x="157.07" y="52.72" width="5.42" height="5.42" fill="#000413"/><rect x="163.59" y="52.72" width="5.42" height="5.42" fill="#7c1800"/><rect x="170.12" y="52.72" width="5.42" height="5.42" fill="#340a00"/><rect x="176.64" y="52.72" width="5.42" height="5.42" fill="#180400"/><rect x="183.16" y="52.72" width="5.42" height="5.42" fill="#000106"/><rect x="189.68" y="52.72" width="5.42" height="5.42" fill="#000412"/><rect x="196.20" y="52.72" width="5.42" height="5.42" fill="#002fbe"/><rect x="202.72" y="52.72" width="5.42" height="5.42" fill="#002080"/><rect x="209.25" y="52.72" width="5.42" height="5.42" fill="#002cb0"/><rect x="215.77" y="52.72" width="5.42" height="5.42" fill="#440d00"/><rect x="222.29" y="52.72" width="5.42" height="5.42" fill="#000d33"/><rect x="228.81" y="52.72" width="5.42" height="5.42" fill="#001a68"/><rect x="235.33" y="52.72" width="5.42" height="5.42" fill="#0029a4"/><rect x="241.85" y="52.72" width="5.42" height="5.42" fill="#821a00"/><rect x="248.38" y="52.72" width="5.42" height="5.42" fill="#971e00"/><rect x="254.90" y="52.72" width="5.42" height="5.42" fill="#240700"/><rect x="261.42" y="52.72" width="5.42" height="5.42" fill="#000a28"/><rect x="267.94" y="52.72" width="5.42" height="5.42" fill="#000e3a"/><rect x="274.46" y="52.72" width="5.42" height="5.42" fill="#000924"/><rect x="280.98" y="52.72" width="5.42" height="5.42" fill="#000000"/><rect x="287.51" y="52.72" width="5.42" height="5.42" fill="#001b6c"/><rect x="294.03" y="52.72" width="5.42" height="5.42" fill="#000001"/><rect x="0.55" y="59.25" width="5.42" height="5.42" fill="#000c30"/><rect x="7.07" y="59.25" width="5.42" height="5.42" fill="#e42d00"/><rect x="13.59" y="59.25" width="5.42" height="5.42" fill="#ee2f00"/><rect x="20.12" y="59.25" width="5.42" height="5.42" fill="#040000"/><rect x="26.64" y="59.25" width="5.42" height="5.42" fill="#000e39"/><rect x="33.16" y="59.25" width="5.42" height="5.42" fill="#e72e00"/><rect x="39.68" y="59.25" width="5.42" height="5.42" fill="#00071d"/><rect x="46.20" y="59.25" width="5.42" height="5.42" fill="#00030f"/><rect x="52.72" y="59.25" width="5.42" height="5.42" fill="#003df3"/><rect x="59.25" y="59.25" width="5.42" height="5.42" fill="#00020a"/><rect x="65.77" y="59.25" width="5.42" height="5.42" fill="#000000"/><rect x="72.29" y="59.25" width="5.42" height="5.42" fill="#000000"/><rect x="78.81" y="59.25" width="5.42" height="5.42" fill="#001450"/><rect x="85.33" y="59.25" width="5.42" height="5.42" fill="#000000"/><rect x="91.85" y="59.25" width="5.42" height="5.42" fill="#003cef"/><rect x="98.38" y="59.25" width="5.42" height="5.42" fill="#000c30"/><rect x="104.90" y="59.25" width="5.42" height="5.42" fill="#00289f"/><rect x="111.42" y="59.25" width="5.42" height="5.42" fill="#000107"/><rect x="117.94" y="59.25" width="5.42" height="5.42" fill="#0032ca"/><rect x="124.46" y="59.25" width="5.42" height="5.42" fill="#0037dd"/><rect x="130.98" y="59.25" width="5.42" height="5.42" fill="#00081f"/><rect x="137.51" y="59.25" width="5.42" height="5.42" fill="#000f3f"/><rect x="144.03" y="59.25" width="5.42" height="5.42" fill="#0a0200"/><rect x="150.55" y="59.25" width="5.42" height="5.42" fill="#020000"/><rect x="157.07" y="59.25" width="5.42" height="5.42" fill="#490e00"/><rect x="163.59" y="59.25" width="5.42" height="5.42" fill="#1f0600"/><rect x="170.12" y="59.25" width="5.42" height="5.42" fill="#380b00"/><rect x="176.64" y="59.25" width="5.42" height="5.42" fill="#9e1f00"/><rect x="183.16" y="59.25" width="5.42" height="5.42" fill="#000208"/><rect x="189.68" y="59.25" width="5.42" height="5.42" fill="#000618"/><rect x="196.20" y="59.25" width="5.42" height="5.42" fill="#f93100"/><rect x="202.72" y="59.25" width="5.42" height="5.42" fill="#001c71"/><rect x="209.25" y="59.25" width="5.42" height="5.42" fill="#3c0c00"/><rect x="215.77" y="59.25" width="5.42" height="5.42" fill="#1a0500"/><rect x="222.29" y="59.25" width="5.42" height="5.42" fill="#0032c8"/><rect x="228.81" y="59.25" width="5.42" height="5.42" fill="#7e1900"/><rect x="235.33" y="59.25" width="5.42" height="5.42" fill="#a82100"/><rect x="241.85" y="59.25" width="5.42" height="5.42" fill="#150400"/><rect x="248.38" y="59.25" width="5.42" height="5.42" fill="#410d00"/><rect x="254.90" y="59.25" width="5.42" height="5.42" fill="#6e1600"/><rect x="261.42" y="59.25" width="5.42" height="5.42" fill="#001e79"/><rect x="267.94" y="59.25" width="5.42" height="5.42" fill="#010000"/><rect x="274.46" y="59.25" width="5.42" height="5.42" fill="#000000"/><rect x="280.98" y="59.25" width="5.42" height="5.42" fill="#7d1900"/><rect x="287.51" y="59.25" width="5.42" height="5.42" fill="#691500"/><rect x="294.03" y="59.25" width="5.42" height="5.42" fill="#781800"/><rect x="0.55" y="65.77" width="5.42" height="5.42" fill="#0a0200"/><rect x="7.07" y="65.77" width="5.42" height="5.42" fill="#a92100"/><rect x="13.59" y="65.77" width="5.42" height="5.42" fill="#290800"/><rect x="20.12" y="65.77" width="5.42" height="5.42" fill="#2e0900"/><rect x="26.64" y="65.77" width="5.42" height="5.42" fill="#001040"/><rect x="33.16" y="65.77" width="5.42" height="5.42" fill="#0035d4"/><rect x="39.68" y="65.77" width="5.42" height="5.42" fill="#001f7d"/><rect x="46.20" y="65.77" width="5.42" height="5.42" fill="#00030e"/><rect x="52.72" y="65.77" width="5.42" height="5.42" fill="#002493"/><rect x="59.25" y="65.77" width="5.42" height="5.42" fill="#7e1900"/><rect x="65.77" y="65.77" width="5.42" height="5.42" fill="#050100"/><rect x="72.29" y="65.77" width="5.42" height="5.42" fill="#160400"/><rect x="78.81" y="65.77" width="5.42" height="5.42" fill="#150400"/><rect x="85.33" y="65.77" width="5.42" height="5.42" fill="#280800"/><rect x="91.85" y="65.77" width="5.42" height="5.42" fill="#000000"/><rect x="98.38" y="65.77" width="5.42" height="5.42" fill="#003cf0"/><rect x="104.90" y="65.77" width="5.42" height="5.42" fill="#651400"/><rect x="111.42" y="65.77" width="5.42" height="5.42" fill="#480e00"/><rect x="117.94" y="65.77" width="5.42" height="5.42" fill="#000000"/><rect x="124.46" y="65.77" width="5.42" height="5.42" fill="#020000"/><rect x="130.98" y="65.77" width="5.42" height="5.42" fill="#200600"/><rect x="137.51" y="65.77" width="5.42" height="5.42" fill="#002db4"/><rect x="144.03" y="65.77" width="5.42" height="5.42" fill="#420d00"/><rect x="150.55" y="65.77" width="5.42" height="5.42" fill="#000d35"/><rect x="157.07" y="65.77" width="5.42" height="5.42" fill="#002bac"/><rect x="163.59" y="65.77" width="5.42" height="5.42" fill="#000b2f"/><rect x="170.12" y="65.77" width="5.42" height="5.42" fill="#3e0c00"/><rect x="176.64" y="65.77" width="5.42" height="5.42" fill="#00134e"/><rect x="183.16" y="65.77" width="5.42" height="5.42" fill="#440d00"/><rect x="189.68" y="65.77" width="5.42" height="5.42" fill="#f13000"/><rect x="196.20" y="65.77" width="5.42" height="5.42" fill="#000000"/><rect x="202.72" y="65.77" width="5.42" height="5.42" fill="#00020a"/><rect x="209.25" y="65.77" width="5.42" height="5.42" fill="#000000"/><rect x="215.77" y="65.77" width="5.42" height="5.42" fill="#2a0800"/><rect x="222.29" y="65.77" width="5.42" height="5.42" fill="#531000"/><rect x="228.81" y="65.77" width="5.42" height="5.42" fill="#120300"/><rect x="235.33" y="65.77" width="5.42" height="5.42" fill="#1a0500"/><rect x="241.85" y="65.77" width="5.42" height="5.42" fill="#002aaa"/><rect x="248.38" y="65.77" width="5.42" height="5.42" fill="#001c73"/><rect x="254.90" y="65.77" width="5.42" height="5.42" fill="#000d34"/><rect x="261.42" y="65.77" width="5.42" height="5.42" fill="#460e00"/><rect x="267.94" y="65.77" width="5.42" height="5.42" fill="#00071f"/><rect x="274.46" y="65.77" width="5.42" height="5.42" fill="#070100"/><rect x="280.98" y="65.77" width="5.42" height="5.42" fill="#003ae7"/><rect x="287.51" y="65.77" width="5.42" height="5.42" fill="#002eb9"/><rect x="294.03" y="65.77" width="5.42" height="5.42" fill="#000b2e"/><rect x="0.55" y="72.29" width="5.42" height="5.42" fill="#250700"/><rect x="7.07" y="72.29" width="5.42" height="5.42" fill="#2d0900"/><rect x="13.59" y="72.29" width="5.42" height="5.42" fill="#260700"/><rect x="20.12" y="72.29" width="5.42" height="5.42" fill="#000924"/><rect x="26.64" y="72.29" width="5.42" height="5.42" fill="#000000"/><rect x="33.16" y="72.29" width="5.42" height="5.42" fill="#000000"/><rect x="39.68" y="72.29" width="5.42" height="5.42" fill="#000000"/><rect x="46.20" y="72.29" width="5.42" height="5.42" fill="#002288"/><rect x="52.72" y="72.29" width="5.42" height="5.42" fill="#a92100"/><rect x="59.25" y="72.29" width="5.42" height="5.42" fill="#001451"/><rect x="65.77" y="72.29" width="5.42" height="5.42" fill="#f33000"/><rect x="72.29" y="72.29" width="5.42" height="5.42" fill="#cd2900"/><rect x="78.81" y="72.29" width="5.42" height="5.42" fill="#0038e2"/><rect x="85.33" y="72.29" width="5.42" height="5.42" fill="#000000"/><rect x="91.85" y="72.29" width="5.42" height="5.42" fill="#731700"/><rect x="98.38" y="72.29" width="5.42" height="5.42" fill="#ea2e00"/><rect x="104.90" y="72.29" width="5.42" height="5.42" fill="#000001"/><rect x="111.42" y="72.29" width="5.42" height="5.42" fill="#000b2e"/><rect x="117.94" y="72.29" width="5.42" height="5.42" fill="#00124b"/><rect x="124.46" y="72.29" width="5.42" height="5.42" fill="#d52a00"/><rect x="130.98" y="72.29" width="5.42" height="5.42" fill="#00124b"/><rect x="137.51" y="72.29" width="5.42" height="5.42" fill="#0a0200"/><rect x="144.03" y="72.29" width="5.42" height="5.42" fill="#001d77"/><rect x="150.55" y="72.29" width="5.42" height="5.42" fill="#010000"/><rect x="157.07" y="72.29" width="5.42" height="5.42" fill="#dc2c00"/><rect x="163.59" y="72.29" width="5.42" height="5.42" fill="#001f7d"/><rect x="170.12" y="72.29" width="5.42" height="5.42" fill="#731700"/><rect x="176.64" y="72.29" width="5.42" height="5.42" fill="#000000"/><rect x="183.16" y="72.29" width="5.42" height="5.42" fill="#a42000"/><rect x="189.68" y="72.29" width="5.42" height="5.42" fill="#320a00"/><rect x="196.20" y="72.29" width="5.42" height="5.42" fill="#00103f"/><rect x="202.72" y="72.29" width="5.42" height="5.42" fill="#ad2200"/><rect x="209.25" y="72.29" width="5.42" height="5.42" fill="#000000"/><rect x="215.77" y="72.29" width="5.42" height="5.42" fill="#0036db"/><rect x="222.29" y="72.29" width="5.42" height="5.42" fill="#003cf0"/><rect x="228.81" y="72.29" width="5.42" height="5.42" fill="#000000"/><rect x="235.33" y="72.29" width="5.42" height="5.42" fill="#000001"/><rect x="241.85" y="72.29" width="5.42" height="5.42" fill="#000820"/><rect x="248.38" y="72.29" width="5.42" height="5.42" fill="#001e78"/><rect x="254.90" y="72.29" width="5.42" height="5.42" fill="#000413"/><rect x="261.42" y="72.29" width="5.42" height="5.42" fill="#00061b"/><rect x="267.94" y="72.29" width="5.42" height="5.42" fill="#811900"/><rect x="274.46" y="72.29" width="5.42" height="5.42" fill="#003cf2"/><rect x="280.98" y="72.29" width="5.42" height="5.42" fill="#4a0e00"/><rect x="287.51" y="72.29" width="5.42" height="5.42" fill="#801900"/><rect x="294.03" y="72.29" width="5.42" height="5.42" fill="#002187"/><rect x="0.55" y="78.81" width="5.42" height="5.42" fill="#c42700"/><rect x="7.07" y="78.81" width="5.42" height="5.42" fill="#370b00"/><rect x="13.59" y="78.81" width="5.42" height="5.42" fill="#b02300"/><rect x="20.12" y="78.81" width="5.42" height="5.42" fill="#000925"/><rect x="26.64" y="78.81" width="5.42" height="5.42" fill="#00030c"/><rect x="33.16" y="78.81" width="5.42" height="5.42" fill="#000208"/><rect x="39.68" y="78.81" width="5.42" height="5.42" fill="#ff3300"/><rect x="46.20" y="78.81" width="5.42" height="5.42" fill="#0b0200"/><rect x="52.72" y="78.81" width="5.42" height="5.42" fill="#00030e"/><rect x="59.25" y="78.81" width="5.42" height="5.42" fill="#000003"/><rect x="65.77" y="78.81" width="5.42" height="5.42" fill="#000a2b"/><rect x="72.29" y="78.81" width="5.42" height="5.42" fill="#0031c4"/><rect x="78.81" y="78.81" width="5.42" height="5.42" fill="#002595"/><rect x="85.33" y="78.81" width="5.42" height="5.42" fill="#7d1900"/><rect x="91.85" y="78.81" width="5.42" height="5.42" fill="#000926"/><rect x="98.38" y="78.81" width="5.42" height="5.42" fill="#cc2800"/><rect x="104.90" y="78.81" width="5.42" height="5.42" fill="#000d36"/><rect x="111.42" y="78.81" width="5.42" height="5.42" fill="#000b2f"/><rect x="117.94" y="78.81" width="5.42" height="5.42" fill="#000000"/><rect x="124.46" y="78.81" width="5.42" height="5.42" fill="#001557"/><rect x="130.98" y="78.81" width="5.42" height="5.42" fill="#00030b"/><rect x="137.51" y="78.81" width="5.42" height="5.42" fill="#df2c00"/><rect x="144.03" y="78.81" width="5.42" height="5.42" fill="#a22000"/><rect x="150.55" y="78.81" width="5.42" height="5.42" fill="#6e1600"/><rect x="157.07" y="78.81" width="5.42" height="5.42" fill="#160400"/><rect x="163.59" y="78.81" width="5.42" height="5.42" fill="#b92500"/><rect x="170.12" y="78.81" width="5.42" height="5.42" fill="#d12900"/><rect x="176.64" y="78.81" width="5.42" height="5.42" fill="#040000"/><rect x="183.16" y="78.81" width="5.42" height="5.42" fill="#3a0b00"/><rect x="189.68" y="78.81" width="5.42" height="5.42" fill="#0031c3"/><rect x="196.20" y="78.81" width="5.42" height="5.42" fill="#400c00"/><rect x="202.72" y="78.81" width="5.42" height="5.42" fill="#000001"/><rect x="209.25" y="78.81" width="5.42" height="5.42" fill="#4b0f00"/><rect x="215.77" y="78.81" width="5.42" height="5.42" fill="#1b0500"/><rect x="222.29" y="78.81" width="5.42" height="5.42" fill="#000926"/><rect x="228.81" y="78.81" width="5.42" height="5.42" fill="#0031c3"/><rect x="235.33" y="78.81" width="5.42" height="5.42" fill="#c52700"/><rect x="241.85" y="78.81" width="5.42" height="5.42" fill="#002081"/><rect x="248.38" y="78.81" width="5.42" height="5.42" fill="#000000"/><rect x="254.90" y="78.81" width="5.42" height="5.42" fill="#000413"/><rect x="261.42" y="78.81" width="5.42" height="5.42" fill="#000822"/><rect x="267.94" y="78.81" width="5.42" height="5.42" fill="#430d00"/><rect x="274.46" y="78.81" width="5.42" height="5.42" fill="#f13000"/><rect x="280.98" y="78.81" width="5.42" height="5.42" fill="#000c31"/><rect x="287.51" y="78.81" width="5.42" height="5.42" fill="#1f0600"/><rect x="294.03" y="78.81" width="5.42" height="5.42" fill="#000821"/><rect x="0.55" y="85.33" width="5.42" height="5.42" fill="#050100"/><rect x="7.07" y="85.33" width="5.42" height="5.42" fill="#000107"/><rect x="13.59" y="85.33" width="5.42" height="5.42" fill="#001965"/><rect x="20.12" y="85.33" width="5.42" height="5.42" fill="#001a69"/><rect x="26.64" y="85.33" width="5.42" height="5.42" fill="#00134c"/><rect x="33.16" y="85.33" width="5.42" height="5.42" fill="#b32300"/><rect x="39.68" y="85.33" width="5.42" height="5.42" fill="#000000"/><rect x="46.20" y="85.33" width="5.42" height="5.42" fill="#001145"/><rect x="52.72" y="85.33" width="5.42" height="5.42" fill="#b42400"/><rect x="59.25" y="85.33" width="5.42" height="5.42" fill="#ff3300"/><rect x="65.77" y="85.33" width="5.42" height="5.42" fill="#000001"/><rect x="72.29" y="85.33" width="5.42" height="5.42" fill="#001e78"/><rect x="78.81" y="85.33" width="5.42" height="5.42" fill="#001555"/><rect x="85.33" y="85.33" width="5.42" height="5.42" fill="#00279f"/><rect x="91.85" y="85.33" width="5.42" height="5.42" fill="#000413"/><rect x="98.38" y="85.33" width="5.42" height="5.42" fill="#00279e"/><rect x="104.90" y="85.33" width="5.42" height="5.42" fill="#000f3b"/><rect x="111.42" y="85.33" width="5.42" height="5.42" fill="#000c32"/><rect x="117.94" y="85.33" width="5.42" height="5.42" fill="#070100"/><rect x="124.46" y="85.33" width="5.42" height="5.42" fill="#a42000"/><rect x="130.98" y="85.33" width="5.42" height="5.42" fill="#490e00"/><rect x="137.51" y="85.33" width="5.42" height="5.42" fill="#000105"/><rect x="144.03" y="85.33" width="5.42" height="5.42" fill="#000104"/><rect x="150.55" y="85.33" width="5.42" height="5.42" fill="#010000"/><rect x="157.07" y="85.33" width="5.42" height="5.42" fill="#00020b"/><rect x="163.59" y="85.33" width="5.42" height="5.42" fill="#000514"/><rect x="170.12" y="85.33" width="5.42" height="5.42" fill="#002eb7"/><rect x="176.64" y="85.33" width="5.42" height="5.42" fill="#000a2a"/><rect x="183.16" y="85.33" width="5.42" height="5.42" fill="#e92e00"/><rect x="189.68" y="85.33" width="5.42" height="5.42" fill="#002083"/><rect x="196.20" y="85.33" width="5.42" height="5.42" fill="#000000"/><rect x="202.72" y="85.33" width="5.42" height="5.42" fill="#160400"/><rect x="209.25" y="85.33" width="5.42" height="5.42" fill="#921d00"/><rect x="215.77" y="85.33" width="5.42" height="5.42" fill="#001248"/><rect x="222.29" y="85.33" width="5.42" height="5.42" fill="#000b2d"/><rect x="228.81" y="85.33" width="5.42" height="5.42" fill="#000d37"/><rect x="235.33" y="85.33" width="5.42" height="5.42" fill="#000106"/><rect x="241.85" y="85.33" width="5.42" height="5.42" fill="#000001"/><rect x="248.38" y="85.33" width="5.42" height="5.42" fill="#dd2c00"/><rect x="254.90" y="85.33" width="5.42" height="5.42" fill="#871b00"/><rect x="261.42" y="85.33" width="5.42" height="5.42" fill="#991e00"/><rect x="267.94" y="85.33" width="5.42" height="5.42" fill="#0037de"/><rect x="274.46" y="85.33" width="5.42" height="5.42" fill="#0035d3"/><rect x="280.98" y="85.33" width="5.42" height="5.42" fill="#350a00"/><rect x="287.51" y="85.33" width="5.42" height="5.42" fill="#ab2200"/><rect x="294.03" y="85.33" width="5.42" height="5.42" fill="#000000"/><rect x="0.55" y="91.85" width="5.42" height="5.42" fill="#0b0200"/><rect x="7.07" y="91.85" width="5.42" height="5.42" fill="#003df4"/><rect x="13.59" y="91.85" width="5.42" height="5.42" fill="#000208"/><rect x="20.12" y="91.85" width="5.42" height="5.42" fill="#c52700"/><rect x="26.64" y="91.85" width="5.42" height="5.42" fill="#771700"/><rect x="33.16" y="91.85" width="5.42" height="5.42" fill="#8c1c00"/><rect x="39.68" y="91.85" width="5.42" height="5.42" fill="#ee2f00"/><rect x="46.20" y="91.85" width="5.42" height="5.42" fill="#000d37"/><rect x="52.72" y="91.85" width="5.42" height="5.42" fill="#002490"/><rect x="59.25" y="91.85" width="5.42" height="5.42" fill="#001b6e"/><rect x="65.77" y="91.85" width="5.42" height="5.42" fill="#010000"/><rect x="72.29" y="91.85" width="5.42" height="5.42" fill="#290800"/><rect x="78.81" y="91.85" width="5.42" height="5.42" fill="#d22a00"/><rect x="85.33" y="91.85" width="5.42" height="5.42" fill="#3b0b00"/><rect x="91.85" y="91.85" width="5.42" height="5.42" fill="#1c0500"/><rect x="98.38" y="91.85" width="5.42" height="5.42" fill="#511000"/><rect x="104.90" y="91.85" width="5.42" height="5.42" fill="#000000"/><rect x="111.42" y="91.85" width="5.42" height="5.42" fill="#040000"/><rect x="117.94" y="91.85" width="5.42" height="5.42" fill="#0033cc"/><rect x="124.46" y="91.85" width="5.42" height="5.42" fill="#5b1200"/><rect x="130.98" y="91.85" width="5.42" height="5.42" fill="#000f3f"/><rect x="137.51" y="91.85" width="5.42" height="5.42" fill="#bf2600"/><rect x="144.03" y="91.85" width="5.42" height="5.42" fill="#1b0500"/><rect x="150.55" y="91.85" width="5.42" height="5.42" fill="#000820"/><rect x="157.07" y="91.85" width="5.42" height="5.42" fill="#002081"/><rect x="163.59" y="91.85" width="5.42" height="5.42" fill="#000d35"/><rect x="170.12" y="91.85" width="5.42" height="5.42" fill="#180400"/><rect x="176.64" y="91.85" width="5.42" height="5.42" fill="#300900"/><rect x="183.16" y="91.85" width="5.42" height="5.42" fill="#00238d"/><rect x="189.68" y="91.85" width="5.42" height="5.42" fill="#002cb0"/><rect x="196.20" y="91.85" width="5.42" height="5.42" fill="#010000"/><rect x="202.72" y="91.85" width="5.42" height="5.42" fill="#0a0200"/><rect x="209.25" y="91.85" width="5.42" height="5.42" fill="#000209"/><rect x="215.77" y="91.85" width="5.42" height="5.42" fill="#001143"/><rect x="222.29" y="91.85" width="5.42" height="5.42" fill="#0e0200"/><rect x="228.81" y="91.85" width="5.42" height="5.42" fill="#003ae9"/><rect x="235.33" y="91.85" width="5.42" height="5.42" fill="#000820"/><rect x="241.85" y="91.85" width="5.42" height="5.42" fill="#000000"/><rect x="248.38" y="91.85" width="5.42" height="5.42" fill="#e12d00"/><rect x="254.90" y="91.85" width="5.42" height="5.42" fill="#1b0500"/><rect x="261.42" y="91.85" width="5.42" height="5.42" fill="#a12000"/><rect x="267.94" y="91.85" width="5.42" height="5.42" fill="#000000"/><rect x="274.46" y="91.85" width="5.42" height="5.42" fill="#000f3e"/><rect x="280.98" y="91.85" width="5.42" height="5.42" fill="#000e38"/><rect x="287.51" y="91.85" width="5.42" height="5.42" fill="#e32d00"/><rect x="294.03" y="91.85" width="5.42" height="5.42" fill="#330a00"/><rect x="0.55" y="98.38" width="5.42" height="5.42" fill="#00071e"/><rect x="7.07" y="98.38" width="5.42" height="5.42" fill="#0037de"/><rect x="13.59" y="98.38" width="5.42" height="5.42" fill="#000000"/><rect x="20.12" y="98.38" width="5.42" height="5.42" fill="#260700"/><rect x="26.64" y="98.38" width="5.42" height="5.42" fill="#000104"/><rect x="33.16" y="98.38" width="5.42" height="5.42" fill="#000c33"/><rect x="39.68" y="98.38" width="5.42" height="5.42" fill="#230700"/><rect x="46.20" y="98.38" width="5.42" height="5.42" fill="#c32700"/><rect x="52.72" y="98.38" width="5.42" height="5.42" fill="#001042"/><rect x="59.25" y="98.38" width="5.42" height="5.42" fill="#0034d2"/><rect x="65.77" y="98.38" width="5.42" height="5.42" fill="#000514"/><rect x="72.29" y="98.38" width="5.42" height="5.42" fill="#000104"/><rect x="78.81" y="98.38" width="5.42" height="5.42" fill="#290800"/><rect x="85.33" y="98.38" width="5.42" height="5.42" fill="#001452"/><rect x="91.85" y="98.38" width="5.42" height="5.42" fill="#641400"/><rect x="98.38" y="98.38" width="5.42" height="5.42" fill="#430d00"/><rect x="104.90" y="98.38" width="5.42" height="5.42" fill="#000000"/><rect x="111.42" y="98.38" width="5.42" height="5.42" fill="#00134e"/><rect x="117.94" y="98.38" width="5.42" height="5.42" fill="#eb2f00"/><rect x="124.46" y="98.38" width="5.42" height="5.42" fill="#00071d"/><rect x="130.98" y="98.38" width="5.42" height="5.42" fill="#731700"/><rect x="137.51" y="98.38" width="5.42" height="5.42" fill="#001040"/><rect x="144.03" y="98.38" width="5.42" height="5.42" fill="#001145"/><rect x="150.55" y="98.38" width="5.42" height="5.42" fill="#4f0f00"/><rect x="157.07" y="98.38" width="5.42" height="5.42" fill="#000823"/><rect x="163.59" y="98.38" width="5.42" height="5.42" fill="#db2b00"/><rect x="170.12" y="98.38" width="5.42" height="5.42" fill="#000000"/><rect x="176.64" y="98.38" width="5.42" height="5.42" fill="#001658"/><rect x="183.16" y="98.38" width="5.42" height="5.42" fill="#001144"/><rect x="189.68" y="98.38" width="5.42" height="5.42" fill="#000104"/><rect x="196.20" y="98.38" width="5.42" height="5.42" fill="#220600"/><rect x="202.72" y="98.38" width="5.42" height="5.42" fill="#d82b00"/><rect x="209.25" y="98.38" width="5.42" height="5.42" fill="#001d74"/><rect x="215.77" y="98.38" width="5.42" height="5.42" fill="#000208"/><rect x="222.29" y="98.38" width="5.42" height="5.42" fill="#001249"/><rect x="228.81" y="98.38" width="5.42" height="5.42" fill="#ef2f00"/><rect x="235.33" y="98.38" width="5.42" height="5.42" fill="#001d77"/><rect x="241.85" y="98.38" width="5.42" height="5.42" fill="#0030c1"/><rect x="248.38" y="98.38" width="5.42" height="5.42" fill="#002eb9"/><rect x="254.90" y="98.38" width="5.42" height="5.42" fill="#000208"/><rect x="261.42" y="98.38" width="5.42" height="5.42" fill="#ad2200"/><rect x="267.94" y="98.38" width="5.42" height="5.42" fill="#a12000"/><rect x="274.46" y="98.38" width="5.42" height="5.42" fill="#400c00"/><rect x="280.98" y="98.38" width="5.42" height="5.42" fill="#ff3300"/><rect x="287.51" y="98.38" width="5.42" height="5.42" fill="#c92800"/><rect x="294.03" y="98.38" width="5.42" height="5.42" fill="#000517"/><rect x="0.55" y="104.90" width="5.42" height="5.42" fill="#001659"/><rect x="7.07" y="104.90" width="5.42" height="5.42" fill="#cd2900"/><rect x="13.59" y="104.90" width="5.42" height="5.42" fill="#470e00"/><rect x="20.12" y="104.90" width="5.42" height="5.42" fill="#0035d4"/><rect x="26.64" y="104.90" width="5.42" height="5.42" fill="#220600"/><rect x="33.16" y="104.90" width="5.42" height="5.42" fill="#00020a"/><rect x="39.68" y="104.90" width="5.42" height="5.42" fill="#00020b"/><rect x="46.20" y="104.90" width="5.42" height="5.42" fill="#000516"/><rect x="52.72" y="104.90" width="5.42" height="5.42" fill="#001964"/><rect x="59.25" y="104.90" width="5.42" height="5.42" fill="#003cf1"/><rect x="65.77" y="104.90" width="5.42" height="5.42" fill="#000a29"/><rect x="72.29" y="104.90" width="5.42" height="5.42" fill="#000411"/><rect x="78.81" y="104.90" width="5.42" height="5.42" fill="#de2c00"/><rect x="85.33" y="104.90" width="5.42" height="5.42" fill="#002184"/><rect x="91.85" y="104.90" width="5.42" height="5.42" fill="#e62e00"/><rect x="98.38" y="104.90" width="5.42" height="5.42" fill="#00134c"/><rect x="104.90" y="104.90" width="5.42" height="5.42" fill="#00030f"/><rect x="111.42" y="104.90" width="5.42" height="5.42" fill="#741700"/><rect x="117.94" y="104.90" width="5.42" height="5.42" fill="#751700"/><rect x="124.46" y="104.90" width="5.42" height="5.42" fill="#000002"/><rect x="130.98" y="104.90" width="5.42" height="5.42" fill="#0031c3"/><rect x="137.51" y="104.90" width="5.42" height="5.42" fill="#000000"/><rect x="144.03" y="104.90" width="5.42" height="5.42" fill="#00030c"/><rect x="150.55" y="104.90" width="5.42" height="5.42" fill="#bf2600"/><rect x="157.07" y="104.90" width="5.42" height="5.42" fill="#001555"/><rect x="163.59" y="104.90" width="5.42" height="5.42" fill="#00030e"/><rect x="170.12" y="104.90" width="5.42" height="5.42" fill="#ac2200"/><rect x="176.64" y="104.90" width="5.42" height="5.42" fill="#0035d5"/><rect x="183.16" y="104.90" width="5.42" height="5.42" fill="#000105"/><rect x="189.68" y="104.90" width="5.42" height="5.42" fill="#6e1600"/><rect x="196.20" y="104.90" width="5.42" height="5.42" fill="#521000"/><rect x="202.72" y="104.90" width="5.42" height="5.42" fill="#0033cb"/><rect x="209.25" y="104.90" width="5.42" height="5.42" fill="#0034d1"/><rect x="215.77" y="104.90" width="5.42" height="5.42" fill="#002eb7"/><rect x="222.29" y="104.90" width="5.42" height="5.42" fill="#bf2600"/><rect x="228.81" y="104.90" width="5.42" height="5.42" fill="#000c33"/><rect x="235.33" y="104.90" width="5.42" height="5.42" fill="#480e00"/><rect x="241.85" y="104.90" width="5.42" height="5.42" fill="#ad2200"/><rect x="248.38" y="104.90" width="5.42" height="5.42" fill="#000514"/><rect x="254.90" y="104.90" width="5.42" height="5.42" fill="#000b2c"/><rect x="261.42" y="104.90" width="5.42" height="5.42" fill="#e02c00"/><rect x="267.94" y="104.90" width="5.42" height="5.42" fill="#120300"/><rect x="274.46" y="104.90" width="5.42" height="5.42" fill="#000c30"/><rect x="280.98" y="104.90" width="5.42" height="5.42" fill="#380b00"/><rect x="287.51" y="104.90" width="5.42" height="5.42" fill="#00061b"/><rect x="294.03" y="104.90" width="5.42" height="5.42" fill="#000a2b"/><rect x="0.55" y="111.42" width="5.42" height="5.42" fill="#003cf0"/><rect x="7.07" y="111.42" width="5.42" height="5.42" fill="#4c0f00"/><rect x="13.59" y="111.42" width="5.42" height="5.42" fill="#bc2500"/><rect x="20.12" y="111.42" width="5.42" height="5.42" fill="#170400"/><rect x="26.64" y="111.42" width="5.42" height="5.42" fill="#d32a00"/><rect x="33.16" y="111.42" width="5.42" height="5.42" fill="#0037db"/><rect x="39.68" y="111.42" width="5.42" height="5.42" fill="#000f3e"/><rect x="46.20" y="111.42" width="5.42" height="5.42" fill="#000000"/><rect x="52.72" y="111.42" width="5.42" height="5.42" fill="#df2c00"/><rect x="59.25" y="111.42" width="5.42" height="5.42" fill="#dd2c00"/><rect x="65.77" y="111.42" width="5.42" height="5.42" fill="#000209"/><rect x="72.29" y="111.42" width="5.42" height="5.42" fill="#000d36"/><rect x="78.81" y="111.42" width="5.42" height="5.42" fill="#000002"/><rect x="85.33" y="111.42" width="5.42" height="5.42" fill="#000000"/><rect x="91.85" y="111.42" width="5.42" height="5.42" fill="#c62700"/><rect x="98.38" y="111.42" width="5.42" height="5.42" fill="#00165b"/><rect x="104.90" y="111.42" width="5.42" height="5.42" fill="#681400"/><rect x="111.42" y="111.42" width="5.42" height="5.42" fill="#430d00"/><rect x="117.94" y="111.42" width="5.42" height="5.42" fill="#751700"/><rect x="124.46" y="111.42" width="5.42" height="5.42" fill="#561100"/><rect x="130.98" y="111.42" width="5.42" height="5.42" fill="#100300"/><rect x="137.51" y="111.42" width="5.42" height="5.42" fill="#000617"/><rect x="144.03" y="111.42" width="5.42" height="5.42" fill="#00061a"/><rect x="150.55" y="111.42" width="5.42" height="5.42" fill="#00030e"/><rect x="157.07" y="111.42" width="5.42" height="5.42" fill="#5b1200"/><rect x="163.59" y="111.42" width="5.42" height="5.42" fill="#002aa8"/><rect x="170.12" y="111.42" width="5.42" height="5.42" fill="#001452"/><rect x="176.64" y="111.42" width="5.42" height="5.42" fill="#4b0f00"/><rect x="183.16" y="111.42" width="5.42" height="5.42" fill="#000e37"/><rect x="189.68" y="111.42" width="5.42" height="5.42" fill="#002db5"/><rect x="196.20" y="111.42" width="5.42" height="5.42" fill="#0034d2"/><rect x="202.72" y="111.42" width="5.42" height="5.42" fill="#040000"/><rect x="209.25" y="111.42" width="5.42" height="5.42" fill="#000618"/><rect x="215.77" y="111.42" width="5.42" height="5.42" fill="#f53100"/><rect x="222.29" y="111.42" width="5.42" height="5.42" fill="#a12000"/><rect x="228.81" y="111.42" width="5.42" height="5.42" fill="#fc3200"/><rect x="235.33" y="111.42" width="5.42" height="5.42" fill="#000b2f"/><rect x="241.85" y="111.42" width="5.42" height="5.42" fill="#0029a4"/><rect x="248.38" y="111.42" width="5.42" height="5.42" fill="#00269a"/><rect x="254.90" y="111.42" width="5.42" height="5.42" fill="#000000"/><rect x="261.42" y="111.42" width="5.42" height="5.42" fill="#350a00"/><rect x="267.94" y="111.42" width="5.42" height="5.42" fill="#000001"/><rect x="274.46" y="111.42" width="5.42" height="5.42" fill="#000f3e"/><rect x="280.98" y="111.42" width="5.42" height="5.42" fill="#000104"/><rect x="287.51" y="111.42" width="5.42" height="5.42" fill="#130300"/><rect x="294.03" y="111.42" width="5.42" height="5.42" fill="#260700"/><rect x="0.55" y="117.94" width="5.42" height="5.42" fill="#480e00"/><rect x="7.07" y="117.94" width="5.42" height="5.42" fill="#861a00"/><rect x="13.59" y="117.94" width="5.42" height="5.42" fill="#220600"/><rect x="20.12" y="117.94" width="5.42" height="5.42" fill="#002186"/><rect x="26.64" y="117.94" width="5.42" height="5.42" fill="#821a00"/><rect x="33.16" y="117.94" width="5.42" height="5.42" fill="#000823"/><rect x="39.68" y="117.94" width="5.42" height="5.42" fill="#070100"/><rect x="46.20" y="117.94" width="5.42" height="5.42" fill="#00030c"/><rect x="52.72" y="117.94" width="5.42" height="5.42" fill="#430d00"/><rect x="59.25" y="117.94" width="5.42" height="5.42" fill="#001451"/><rect x="65.77" y="117.94" width="5.42" height="5.42" fill="#000e37"/><rect x="72.29" y="117.94" width="5.42" height="5.42" fill="#000e38"/><rect x="78.81" y="117.94" width="5.42" height="5.42" fill="#001b6f"/><rect x="85.33" y="117.94" width="5.42" height="5.42" fill="#a22000"/><rect x="91.85" y="117.94" width="5.42" height="5.42" fill="#090100"/><rect x="98.38" y="117.94" width="5.42" height="5.42" fill="#000618"/><rect x="104.90" y="117.94" width="5.42" height="5.42" fill="#000107"/><rect x="111.42" y="117.94" width="5.42" height="5.42" fill="#ff3300"/><rect x="117.94" y="117.94" width="5.42" height="5.42" fill="#000000"/><rect x="124.46" y="117.94" width="5.42" height="5.42" fill="#00103f"/><rect x="130.98" y="117.94" width="5.42" height="5.42" fill="#6c1500"/><rect x="137.51" y="117.94" width="5.42" height="5.42" fill="#1e0600"/><rect x="144.03" y="117.94" width="5.42" height="5.42" fill="#ff3300"/><rect x="150.55" y="117.94" width="5.42" height="5.42" fill="#002595"/><rect x="157.07" y="117.94" width="5.42" height="5.42" fill="#000000"/><rect x="163.59" y="117.94" width="5.42" height="5.42" fill="#731700"/><rect x="170.12" y="117.94" width="5.42" height="5.42" fill="#811900"/><rect x="176.64" y="117.94" width="5.42" height="5.42" fill="#ba2500"/><rect x="183.16" y="117.94" width="5.42" height="5.42" fill="#0033cc"/><rect x="189.68" y="117.94" width="5.42" height="5.42" fill="#000823"/><rect x="196.20" y="117.94" width="5.42" height="5.42" fill="#002288"/><rect x="202.72" y="117.94" width="5.42" height="5.42" fill="#001557"/><rect x="209.25" y="117.94" width="5.42" height="5.42" fill="#ee2f00"/><rect x="215.77" y="117.94" width="5.42" height="5.42" fill="#0a0200"/><rect x="222.29" y="117.94" width="5.42" height="5.42" fill="#c82800"/><rect x="228.81" y="117.94" width="5.42" height="5.42" fill="#00030c"/><rect x="235.33" y="117.94" width="5.42" height="5.42" fill="#941d00"/><rect x="241.85" y="117.94" width="5.42" height="5.42" fill="#000001"/><rect x="248.38" y="117.94" width="5.42" height="5.42" fill="#000c31"/><rect x="254.90" y="117.94" width="5.42" height="5.42" fill="#591100"/><rect x="261.42" y="117.94" width="5.42" height="5.42" fill="#d52a00"/><rect x="267.94" y="117.94" width="5.42" height="5.42" fill="#002492"/><rect x="274.46" y="117.94" width="5.42" height="5.42" fill="#0d0200"/><rect x="280.98" y="117.94" width="5.42" height="5.42" fill="#130300"/><rect x="287.51" y="117.94" width="5.42" height="5.42" fill="#001147"/><rect x="294.03" y="117.94" width="5.42" height="5.42" fill="#00030d"/><rect x="0.55" y="124.46" width="5.42" height="5.42" fill="#001e77"/><rect x="7.07" y="124.46" width="5.42" height="5.42" fill="#00134e"/><rect x="13.59" y="124.46" width="5.42" height="5.42" fill="#000d34"/><rect x="20.12" y="124.46" width="5.42" height="5.42" fill="#0e0200"/><rect x="26.64" y="124.46" width="5.42" height="5.42" fill="#1d0500"/><rect x="33.16" y="124.46" width="5.42" height="5.42" fill="#00134f"/><rect x="39.68" y="124.46" width="5.42" height="5.42" fill="#003ae8"/><rect x="46.20" y="124.46" width="5.42" height="5.42" fill="#000618"/><rect x="52.72" y="124.46" width="5.42" height="5.42" fill="#270700"/><rect x="59.25" y="124.46" width="5.42" height="5.42" fill="#00165a"/><rect x="65.77" y="124.46" width="5.42" height="5.42" fill="#00071d"/><rect x="72.29" y="124.46" width="5.42" height="5.42" fill="#00134f"/><rect x="78.81" y="124.46" width="5.42" height="5.42" fill="#631300"/><rect x="85.33" y="124.46" width="5.42" height="5.42" fill="#040000"/><rect x="91.85" y="124.46" width="5.42" height="5.42" fill="#002db6"/><rect x="98.38" y="124.46" width="5.42" height="5.42" fill="#002596"/><rect x="104.90" y="124.46" width="5.42" height="5.42" fill="#000107"/><rect x="111.42" y="124.46" width="5.42" height="5.42" fill="#040000"/><rect x="117.94" y="124.46" width="5.42" height="5.42" fill="#190500"/><rect x="124.46" y="124.46" width="5.42" height="5.42" fill="#00279e"/><rect x="130.98" y="124.46" width="5.42" height="5.42" fill="#001a68"/><rect x="137.51" y="124.46" width="5.42" height="5.42" fill="#2f0900"/><rect x="144.03" y="124.46" width="5.42" height="5.42" fill="#000105"/><rect x="150.55" y="124.46" width="5.42" height="5.42" fill="#000a27"/><rect x="157.07" y="124.46" width="5.42" height="5.42" fill="#00071e"/><rect x="163.59" y="124.46" width="5.42" height="5.42" fill="#dc2c00"/><rect x="170.12" y="124.46" width="5.42" height="5.42" fill="#00071d"/><rect x="176.64" y="124.46" width="5.42" height="5.42" fill="#070100"/><rect x="183.16" y="124.46" width="5.42" height="5.42" fill="#00030f"/><rect x="189.68" y="124.46" width="5.42" height="5.42" fill="#000104"/><rect x="196.20" y="124.46" width="5.42" height="5.42" fill="#931d00"/><rect x="202.72" y="124.46" width="5.42" height="5.42" fill="#ff3300"/><rect x="209.25" y="124.46" width="5.42" height="5.42" fill="#00030e"/><rect x="215.77" y="124.46" width="5.42" height="5.42" fill="#001452"/><rect x="222.29" y="124.46" width="5.42" height="5.42" fill="#3e0c00"/><rect x="228.81" y="124.46" width="5.42" height="5.42" fill="#00134f"/><rect x="235.33" y="124.46" width="5.42" height="5.42" fill="#003bee"/><rect x="241.85" y="124.46" width="5.42" height="5.42" fill="#b02300"/><rect x="248.38" y="124.46" width="5.42" height="5.42" fill="#000003"/><rect x="254.90" y="124.46" width="5.42" height="5.42" fill="#741700"/><rect x="261.42" y="124.46" width="5.42" height="5.42" fill="#000105"/><rect x="267.94" y="124.46" width="5.42" height="5.42" fill="#a12000"/><rect x="274.46" y="124.46" width="5.42" height="5.42" fill="#000000"/><rect x="280.98" y="124.46" width="5.42" height="5.42" fill="#001a68"/><rect x="287.51" y="124.46" width="5.42" height="5.42" fill="#0039e5"/><rect x="294.03" y="124.46" width="5.42" height="5.42" fill="#040000"/><rect x="0.55" y="130.98" width="5.42" height="5.42" fill="#1a0500"/><rect x="7.07" y="130.98" width="5.42" height="5.42" fill="#b62400"/><rect x="13.59" y="130.98" width="5.42" height="5.42" fill="#0028a0"/><rect x="20.12" y="130.98" width="5.42" height="5.42" fill="#140400"/><rect x="26.64" y="130.98" width="5.42" height="5.42" fill="#00030c"/><rect x="33.16" y="130.98" width="5.42" height="5.42" fill="#000000"/><rect x="39.68" y="130.98" width="5.42" height="5.42" fill="#001d74"/><rect x="46.20" y="130.98" width="5.42" height="5.42" fill="#000a27"/><rect x="52.72" y="130.98" width="5.42" height="5.42" fill="#010000"/><rect x="59.25" y="130.98" width="5.42" height="5.42" fill="#c42700"/><rect x="65.77" y="130.98" width="5.42" height="5.42" fill="#002490"/><rect x="72.29" y="130.98" width="5.42" height="5.42" fill="#000000"/><rect x="78.81" y="130.98" width="5.42" height="5.42" fill="#691500"/><rect x="85.33" y="130.98" width="5.42" height="5.42" fill="#e92e00"/><rect x="91.85" y="130.98" width="5.42" height="5.42" fill="#001452"/><rect x="98.38" y="130.98" width="5.42" height="5.42" fill="#002082"/><rect x="104.90" y="130.98" width="5.42" height="5.42" fill="#d32a00"/><rect x="111.42" y="130.98" width="5.42" height="5.42" fill="#f13000"/><rect x="117.94" y="130.98" width="5.42" height="5.42" fill="#000000"/><rect x="124.46" y="130.98" width="5.42" height="5.42" fill="#0030bf"/><rect x="130.98" y="130.98" width="5.42" height="5.42" fill="#c42700"/><rect x="137.51" y="130.98" width="5.42" height="5.42" fill="#000209"/><rect x="144.03" y="130.98" width="5.42" height="5.42" fill="#b22300"/><rect x="150.55" y="130.98" width="5.42" height="5.42" fill="#130300"/><rect x="157.07" y="130.98" width="5.42" height="5.42" fill="#761700"/><rect x="163.59" y="130.98" width="5.42" height="5.42" fill="#001a6a"/><rect x="170.12" y="130.98" width="5.42" height="5.42" fill="#5e1200"/><rect x="176.64" y="130.98" width="5.42" height="5.42" fill="#001144"/><rect x="183.16" y="130.98" width="5.42" height="5.42" fill="#000106"/><rect x="189.68" y="130.98" width="5.42" height="5.42" fill="#851a00"/><rect x="196.20" y="130.98" width="5.42" height="5.42" fill="#791800"/><rect x="202.72" y="130.98" width="5.42" height="5.42" fill="#00165b"/><rect x="209.25" y="130.98" width="5.42" height="5.42" fill="#001146"/><rect x="215.77" y="130.98" width="5.42" height="5.42" fill="#000107"/><rect x="222.29" y="130.98" width="5.42" height="5.42" fill="#010000"/><rect x="228.81" y="130.98" width="5.42" height="5.42" fill="#000209"/><rect x="235.33" y="130.98" width="5.42" height="5.42" fill="#002185"/><rect x="241.85" y="130.98" width="5.42" height="5.42" fill="#000e38"/><rect x="248.38" y="130.98" width="5.42" height="5.42" fill="#3c0c00"/><rect x="254.90" y="130.98" width="5.42" height="5.42" fill="#ac2200"/><rect x="261.42" y="130.98" width="5.42" height="5.42" fill="#0033cb"/><rect x="267.94" y="130.98" width="5.42" height="5.42" fill="#060100"/><rect x="274.46" y="130.98" width="5.42" height="5.42" fill="#4d0f00"/><rect x="280.98" y="130.98" width="5.42" height="5.42" fill="#0033ce"/><rect x="287.51" y="130.98" width="5.42" height="5.42" fill="#801900"/><rect x="294.03" y="130.98" width="5.42" height="5.42" fill="#002289"/><rect x="0.55" y="137.51" width="5.42" height="5.42" fill="#0e0200"/><rect x="7.07" y="137.51" width="5.42" height="5.42" fill="#040000"/><rect x="13.59" y="137.51" width="5.42" height="5.42" fill="#150400"/><rect x="20.12" y="137.51" width="5.42" height="5.42" fill="#00071f"/><rect x="26.64" y="137.51" width="5.42" height="5.42" fill="#000104"/><rect x="33.16" y="137.51" width="5.42" height="5.42" fill="#0a0200"/><rect x="39.68" y="137.51" width="5.42" height="5.42" fill="#000003"/><rect x="46.20" y="137.51" width="5.42" height="5.42" fill="#200600"/><rect x="52.72" y="137.51" width="5.42" height="5.42" fill="#000001"/><rect x="59.25" y="137.51" width="5.42" height="5.42" fill="#000002"/><rect x="65.77" y="137.51" width="5.42" height="5.42" fill="#0037dc"/><rect x="72.29" y="137.51" width="5.42" height="5.42" fill="#130300"/><rect x="78.81" y="137.51" width="5.42" height="5.42" fill="#000000"/><rect x="85.33" y="137.51" width="5.42" height="5.42" fill="#000f3d"/><rect x="91.85" y="137.51" width="5.42" height="5.42" fill="#511000"/><rect x="98.38" y="137.51" width="5.42" height="5.42" fill="#5a1200"/><rect x="104.90" y="137.51" width="5.42" height="5.42" fill="#000000"/><rect x="111.42" y="137.51" width="5.42" height="5.42" fill="#00175d"/><rect x="117.94" y="137.51" width="5.42" height="5.42" fill="#000000"/><rect x="124.46" y="137.51" width="5.42" height="5.42" fill="#002491"/><rect x="130.98" y="137.51" width="5.42" height="5.42" fill="#002081"/><rect x="137.51" y="137.51" width="5.42" height="5.42" fill="#000002"/><rect x="144.03" y="137.51" width="5.42" height="5.42" fill="#00279e"/><rect x="150.55" y="137.51" width="5.42" height="5.42" fill="#000001"/><rect x="157.07" y="137.51" width="5.42" height="5.42" fill="#000000"/><rect x="163.59" y="137.51" width="5.42" height="5.42" fill="#0033cb"/><rect x="170.12" y="137.51" width="5.42" height="5.42" fill="#180400"/><rect x="176.64" y="137.51" width="5.42" height="5.42" fill="#0029a6"/><rect x="183.16" y="137.51" width="5.42" height="5.42" fill="#400c00"/><rect x="189.68" y="137.51" width="5.42" height="5.42" fill="#591100"/><rect x="196.20" y="137.51" width="5.42" height="5.42" fill="#000000"/><rect x="202.72" y="137.51" width="5.42" height="5.42" fill="#002fbf"/><rect x="209.25" y="137.51" width="5.42" height="5.42" fill="#000000"/><rect x="215.77" y="137.51" width="5.42" height="5.42" fill="#00020b"/><rect x="222.29" y="137.51" width="5.42" height="5.42" fill="#da2b00"/><rect x="228.81" y="137.51" width="5.42" height="5.42" fill="#001e7b"/><rect x="235.33" y="137.51" width="5.42" height="5.42" fill="#8d1c00"/><rect x="241.85" y="137.51" width="5.42" height="5.42" fill="#ff3300"/><rect x="248.38" y="137.51" width="5.42" height="5.42" fill="#400c00"/><rect x="254.90" y="137.51" width="5.42" height="5.42" fill="#701600"/><rect x="261.42" y="137.51" width="5.42" height="5.42" fill="#001554"/><rect x="267.94" y="137.51" width="5.42" height="5.42" fill="#f73100"/><rect x="274.46" y="137.51" width="5.42" height="5.42" fill="#000000"/><rect x="280.98" y="137.51" width="5.42" height="5.42" fill="#df2c00"/><rect x="287.51" y="137.51" width="5.42" height="5.42" fill="#bc2500"/><rect x="294.03" y="137.51" width="5.42" height="5.42" fill="#001967"/><rect x="0.55" y="144.03" width="5.42" height="5.42" fill="#5f1300"/><rect x="7.07" y="144.03" width="5.42" height="5.42" fill="#c82800"/><rect x="13.59" y="144.03" width="5.42" height="5.42" fill="#002db4"/><rect x="20.12" y="144.03" width="5.42" height="5.42" fill="#000411"/><rect x="26.64" y="144.03" width="5.42" height="5.42" fill="#4c0f00"/><rect x="33.16" y="144.03" width="5.42" height="5.42" fill="#001a6b"/><rect x="39.68" y="144.03" width="5.42" height="5.42" fill="#ac2200"/><rect x="46.20" y="144.03" width="5.42" height="5.42" fill="#000a2b"/><rect x="52.72" y="144.03" width="5.42" height="5.42" fill="#701600"/><rect x="59.25" y="144.03" width="5.42" height="5.42" fill="#001d76"/><rect x="65.77" y="144.03" width="5.42" height="5.42" fill="#000000"/><rect x="72.29" y="144.03" width="5.42" height="5.42" fill="#bf2600"/><rect x="78.81" y="144.03" width="5.42" height="5.42" fill="#00134c"/><rect x="85.33" y="144.03" width="5.42" height="5.42" fill="#000c30"/><rect x="91.85" y="144.03" width="5.42" height="5.42" fill="#000000"/><rect x="98.38" y="144.03" width="5.42" height="5.42" fill="#00061a"/><rect x="104.90" y="144.03" width="5.42" height="5.42" fill="#0034cf"/><rect x="111.42" y="144.03" width="5.42" height="5.42" fill="#00175c"/><rect x="117.94" y="144.03" width="5.42" height="5.42" fill="#001a69"/><rect x="124.46" y="144.03" width="5.42" height="5.42" fill="#cd2900"/><rect x="130.98" y="144.03" width="5.42" height="5.42" fill="#280800"/><rect x="137.51" y="144.03" width="5.42" height="5.42" fill="#ab2200"/><rect x="144.03" y="144.03" width="5.42" height="5.42" fill="#001964"/><rect x="150.55" y="144.03" width="5.42" height="5.42" fill="#5d1200"/><rect x="157.07" y="144.03" width="5.42" height="5.42" fill="#00228b"/><rect x="163.59" y="144.03" width="5.42" height="5.42" fill="#020000"/><rect x="170.12" y="144.03" width="5.42" height="5.42" fill="#180400"/><rect x="176.64" y="144.03" width="5.42" height="5.42" fill="#00030f"/><rect x="183.16" y="144.03" width="5.42" height="5.42" fill="#991e00"/><rect x="189.68" y="144.03" width="5.42" height="5.42" fill="#050100"/><rect x="196.20" y="144.03" width="5.42" height="5.42" fill="#090100"/><rect x="202.72" y="144.03" width="5.42" height="5.42" fill="#a12000"/><rect x="209.25" y="144.03" width="5.42" height="5.42" fill="#002593"/><rect x="215.77" y="144.03" width="5.42" height="5.42" fill="#ff3300"/><rect x="222.29" y="144.03" width="5.42" height="5.42" fill="#160400"/><rect x="228.81" y="144.03" width="5.42" height="5.42" fill="#000107"/><rect x="235.33" y="144.03" width="5.42" height="5.42" fill="#651400"/><rect x="241.85" y="144.03" width="5.42" height="5.42" fill="#000b2f"/><rect x="248.38" y="144.03" width="5.42" height="5.42" fill="#ff3300"/><rect x="254.90" y="144.03" width="5.42" height="5.42" fill="#090100"/><rect x="261.42" y="144.03" width="5.42" height="5.42" fill="#00030f"/><rect x="267.94" y="144.03" width="5.42" height="5.42" fill="#511000"/><rect x="274.46" y="144.03" width="5.42" height="5.42" fill="#000001"/><rect x="280.98" y="144.03" width="5.42" height="5.42" fill="#00175f"/><rect x="287.51" y="144.03" width="5.42" height="5.42" fill="#460e00"/><rect x="294.03" y="144.03" width="5.42" height="5.42" fill="#0031c4"/><rect x="0.55" y="150.55" width="5.42" height="5.42" fill="#731700"/><rect x="7.07" y="150.55" width="5.42" height="5.42" fill="#000d34"/><rect x="13.59" y="150.55" width="5.42" height="5.42" fill="#190500"/><rect x="20.12" y="150.55" width="5.42" height="5.42" fill="#f93100"/><rect x="26.64" y="150.55" width="5.42" height="5.42" fill="#0b0200"/><rect x="33.16" y="150.55" width="5.42" height="5.42" fill="#220600"/><rect x="39.68" y="150.55" width="5.42" height="5.42" fill="#00071c"/><rect x="46.20" y="150.55" width="5.42" height="5.42" fill="#003cf2"/><rect x="52.72" y="150.55" width="5.42" height="5.42" fill="#0034d2"/><rect x="59.25" y="150.55" width="5.42" height="5.42" fill="#001c71"/><rect x="65.77" y="150.55" width="5.42" height="5.42" fill="#120300"/><rect x="72.29" y="150.55" width="5.42" height="5.42" fill="#000002"/><rect x="78.81" y="150.55" width="5.42" height="5.42" fill="#000000"/><rect x="85.33" y="150.55" width="5.42" height="5.42" fill="#ab2200"/><rect x="91.85" y="150.55" width="5.42" height="5.42" fill="#001f7e"/><rect x="98.38" y="150.55" width="5.42" height="5.42" fill="#001042"/><rect x="104.90" y="150.55" width="5.42" height="5.42" fill="#1e0600"/><rect x="111.42" y="150.55" width="5.42" height="5.42" fill="#0037dd"/><rect x="117.94" y="150.55" width="5.42" height="5.42" fill="#003cf1"/><rect x="124.46" y="150.55" width="5.42" height="5.42" fill="#000410"/><rect x="130.98" y="150.55" width="5.42" height="5.42" fill="#002492"/><rect x="137.51" y="150.55" width="5.42" height="5.42" fill="#00030f"/><rect x="144.03" y="150.55" width="5.42" height="5.42" fill="#001043"/><rect x="150.55" y="150.55" width="5.42" height="5.42" fill="#0a0200"/><rect x="157.07" y="150.55" width="5.42" height="5.42" fill="#0b0200"/><rect x="163.59" y="150.55" width="5.42" height="5.42" fill="#00134e"/><rect x="170.12" y="150.55" width="5.42" height="5.42" fill="#140400"/><rect x="176.64" y="150.55" width="5.42" height="5.42" fill="#000000"/><rect x="183.16" y="150.55" width="5.42" height="5.42" fill="#001f7c"/><rect x="189.68" y="150.55" width="5.42" height="5.42" fill="#cd2900"/><rect x="196.20" y="150.55" width="5.42" height="5.42" fill="#000e39"/><rect x="202.72" y="150.55" width="5.42" height="5.42" fill="#001c71"/><rect x="209.25" y="150.55" width="5.42" height="5.42" fill="#00269a"/><rect x="215.77" y="150.55" width="5.42" height="5.42" fill="#190500"/><rect x="222.29" y="150.55" width="5.42" height="5.42" fill="#981e00"/><rect x="228.81" y="150.55" width="5.42" height="5.42" fill="#5b1200"/><rect x="235.33" y="150.55" width="5.42" height="5.42" fill="#000106"/><rect x="241.85" y="150.55" width="5.42" height="5.42" fill="#000c30"/><rect x="248.38" y="150.55" width="5.42" height="5.42" fill="#003ae8"/><rect x="254.90" y="150.55" width="5.42" height="5.42" fill="#1b0500"/><rect x="261.42" y="150.55" width="5.42" height="5.42" fill="#060100"/><rect x="267.94" y="150.55" width="5.42" height="5.42" fill="#000411"/><rect x="274.46" y="150.55" width="5.42" height="5.42" fill="#1b0500"/><rect x="280.98" y="150.55" width="5.42" height="5.42" fill="#000001"/><rect x="287.51" y="150.55" width="5.42" height="5.42" fill="#ce2900"/><rect x="294.03" y="150.55" width="5.42" height="5.42" fill="#410d00"/><rect x="0.55" y="157.07" width="5.42" height="5.42" fill="#000d37"/><rect x="7.07" y="157.07" width="5.42" height="5.42" fill="#b12300"/><rect x="13.59" y="157.07" width="5.42" height="5.42" fill="#0032c8"/><rect x="20.12" y="157.07" width="5.42" height="5.42" fill="#020000"/><rect x="26.64" y="157.07" width="5.42" height="5.42" fill="#000106"/><rect x="33.16" y="157.07" width="5.42" height="5.42" fill="#000f3c"/><rect x="39.68" y="157.07" width="5.42" height="5.42" fill="#002ebb"/><rect x="46.20" y="157.07" width="5.42" height="5.42" fill="#591100"/><rect x="52.72" y="157.07" width="5.42" height="5.42" fill="#003ae7"/><rect x="59.25" y="157.07" width="5.42" height="5.42" fill="#040000"/><rect x="65.77" y="157.07" width="5.42" height="5.42" fill="#d12900"/><rect x="72.29" y="157.07" width="5.42" height="5.42" fill="#001d76"/><rect x="78.81" y="157.07" width="5.42" height="5.42" fill="#001451"/><rect x="85.33" y="157.07" width="5.42" height="5.42" fill="#100300"/><rect x="91.85" y="157.07" width="5.42" height="5.42" fill="#000000"/><rect x="98.38" y="157.07" width="5.42" height="5.42" fill="#1a0500"/><rect x="104.90" y="157.07" width="5.42" height="5.42" fill="#6f1600"/><rect x="111.42" y="157.07" width="5.42" height="5.42" fill="#001860"/><rect x="117.94" y="157.07" width="5.42" height="5.42" fill="#00071e"/><rect x="124.46" y="157.07" width="5.42" height="5.42" fill="#000821"/><rect x="130.98" y="157.07" width="5.42" height="5.42" fill="#0031c4"/><rect x="137.51" y="157.07" width="5.42" height="5.42" fill="#a62100"/><rect x="144.03" y="157.07" width="5.42" height="5.42" fill="#5c1200"/><rect x="150.55" y="157.07" width="5.42" height="5.42" fill="#380b00"/><rect x="157.07" y="157.07" width="5.42" height="5.42" fill="#003bed"/><rect x="163.59" y="157.07" width="5.42" height="5.42" fill="#841a00"/><rect x="170.12" y="157.07" width="5.42" height="5.42" fill="#470e00"/><rect x="176.64" y="157.07" width="5.42" height="5.42" fill="#000000"/><rect x="183.16" y="157.07" width="5.42" height="5.42" fill="#450d00"/><rect x="189.68" y="157.07" width="5.42" height="5.42" fill="#000001"/><rect x="196.20" y="157.07" width="5.42" height="5.42" fill="#001042"/><rect x="202.72" y="157.07" width="5.42" height="5.42" fill="#002493"/><rect x="209.25" y="157.07" width="5.42" height="5.42" fill="#000f3f"/><rect x="215.77" y="157.07" width="5.42" height="5.42" fill="#0033cd"/><rect x="222.29" y="157.07" width="5.42" height="5.42" fill="#000515"/><rect x="228.81" y="157.07" width="5.42" height="5.42" fill="#490e00"/><rect x="235.33" y="157.07" width="5.42" height="5.42" fill="#2e0900"/><rect x="241.85" y="157.07" width="5.42" height="5.42" fill="#851a00"/><rect x="248.38" y="157.07" width="5.42" height="5.42" fill="#360a00"/><rect x="254.90" y="157.07" width="5.42" height="5.42" fill="#000b2f"/><rect x="261.42" y="157.07" width="5.42" height="5.42" fill="#050100"/><rect x="267.94" y="157.07" width="5.42" height="5.42" fill="#000002"/><rect x="274.46" y="157.07" width="5.42" height="5.42" fill="#5f1300"/><rect x="280.98" y="157.07" width="5.42" height="5.42" fill="#010000"/><rect x="287.51" y="157.07" width="5.42" height="5.42" fill="#000b2f"/><rect x="294.03" y="157.07" width="5.42" height="5.42" fill="#1a0500"/><rect x="0.55" y="163.59" width="5.42" height="5.42" fill="#e72e00"/><rect x="7.07" y="163.59" width="5.42" height="5.42" fill="#001147"/><rect x="13.59" y="163.59" width="5.42" height="5.42" fill="#9f1f00"/><rect x="20.12" y="163.59" width="5.42" height="5.42" fill="#0039e4"/><rect x="26.64" y="163.59" width="5.42" height="5.42" fill="#000c31"/><rect x="33.16" y="163.59" width="5.42" height="5.42" fill="#000f3d"/><rect x="39.68" y="163.59" width="5.42" height="5.42" fill="#460e00"/><rect x="46.20" y="163.59" width="5.42" height="5.42" fill="#d42a00"/><rect x="52.72" y="163.59" width="5.42" height="5.42" fill="#470e00"/><rect x="59.25" y="163.59" width="5.42" height="5.42" fill="#000618"/><rect x="65.77" y="163.59" width="5.42" height="5.42" fill="#9f1f00"/><rect x="72.29" y="163.59" width="5.42" height="5.42" fill="#000517"/><rect x="78.81" y="163.59" width="5.42" height="5.42" fill="#000f3b"/><rect x="85.33" y="163.59" width="5.42" height="5.42" fill="#b52400"/><rect x="91.85" y="163.59" width="5.42" height="5.42" fill="#160400"/><rect x="98.38" y="163.59" width="5.42" height="5.42" fill="#2d0900"/><rect x="104.90" y="163.59" width="5.42" height="5.42" fill="#220600"/><rect x="111.42" y="163.59" width="5.42" height="5.42" fill="#f43000"/><rect x="117.94" y="163.59" width="5.42" height="5.42" fill="#000000"/><rect x="124.46" y="163.59" width="5.42" height="5.42" fill="#811900"/><rect x="130.98" y="163.59" width="5.42" height="5.42" fill="#300900"/><rect x="137.51" y="163.59" width="5.42" height="5.42" fill="#8e1c00"/><rect x="144.03" y="163.59" width="5.42" height="5.42" fill="#000002"/><rect x="150.55" y="163.59" width="5.42" height="5.42" fill="#3c0c00"/><rect x="157.07" y="163.59" width="5.42" height="5.42" fill="#070100"/><rect x="163.59" y="163.59" width="5.42" height="5.42" fill="#00071e"/><rect x="170.12" y="163.59" width="5.42" height="5.42" fill="#00124a"/><rect x="176.64" y="163.59" width="5.42" height="5.42" fill="#140400"/><rect x="183.16" y="163.59" width="5.42" height="5.42" fill="#002aa9"/><rect x="189.68" y="163.59" width="5.42" height="5.42" fill="#b72400"/><rect x="196.20" y="163.59" width="5.42" height="5.42" fill="#001d75"/><rect x="202.72" y="163.59" width="5.42" height="5.42" fill="#0036d9"/><rect x="209.25" y="163.59" width="5.42" height="5.42" fill="#002491"/><rect x="215.77" y="163.59" width="5.42" height="5.42" fill="#c72700"/><rect x="222.29" y="163.59" width="5.42" height="5.42" fill="#000412"/><rect x="228.81" y="163.59" width="5.42" height="5.42" fill="#001d77"/><rect x="235.33" y="163.59" width="5.42" height="5.42" fill="#0036d7"/><rect x="241.85" y="163.59" width="5.42" height="5.42" fill="#0032ca"/><rect x="248.38" y="163.59" width="5.42" height="5.42" fill="#2d0900"/><rect x="254.90" y="163.59" width="5.42" height="5.42" fill="#170400"/><rect x="261.42" y="163.59" width="5.42" height="5.42" fill="#2f0900"/><rect x="267.94" y="163.59" width="5.42" height="5.42" fill="#420d00"/><rect x="274.46" y="163.59" width="5.42" height="5.42" fill="#002db4"/><rect x="280.98" y="163.59" width="5.42" height="5.42" fill="#0c0200"/><rect x="287.51" y="163.59" width="5.42" height="5.42" fill="#00030e"/><rect x="294.03" y="163.59" width="5.42" height="5.42" fill="#721600"/><rect x="0.55" y="170.12" width="5.42" height="5.42" fill="#731700"/><rect x="7.07" y="170.12" width="5.42" height="5.42" fill="#a72100"/><rect x="13.59" y="170.12" width="5.42" height="5.42" fill="#002db4"/><rect x="20.12" y="170.12" width="5.42" height="5.42" fill="#951d00"/><rect x="26.64" y="170.12" width="5.42" height="5.42" fill="#ba2500"/><rect x="33.16" y="170.12" width="5.42" height="5.42" fill="#d42a00"/><rect x="39.68" y="170.12" width="5.42" height="5.42" fill="#002491"/><rect x="46.20" y="170.12" width="5.42" height="5.42" fill="#00134d"/><rect x="52.72" y="170.12" width="5.42" height="5.42" fill="#00238d"/><rect x="59.25" y="170.12" width="5.42" height="5.42" fill="#0034d1"/><rect x="65.77" y="170.12" width="5.42" height="5.42" fill="#861a00"/><rect x="72.29" y="170.12" width="5.42" height="5.42" fill="#6e1600"/><rect x="78.81" y="170.12" width="5.42" height="5.42" fill="#180400"/><rect x="85.33" y="170.12" width="5.42" height="5.42" fill="#771700"/><rect x="91.85" y="170.12" width="5.42" height="5.42" fill="#170400"/><rect x="98.38" y="170.12" width="5.42" height="5.42" fill="#000926"/><rect x="104.90" y="170.12" width="5.42" height="5.42" fill="#002697"/><rect x="111.42" y="170.12" width="5.42" height="5.42" fill="#002699"/><rect x="117.94" y="170.12" width="5.42" height="5.42" fill="#4d0f00"/><rect x="124.46" y="170.12" width="5.42" height="5.42" fill="#00134e"/><rect x="130.98" y="170.12" width="5.42" height="5.42" fill="#00061a"/><rect x="137.51" y="170.12" width="5.42" height="5.42" fill="#000003"/><rect x="144.03" y="170.12" width="5.42" height="5.42" fill="#0037df"/><rect x="150.55" y="170.12" width="5.42" height="5.42" fill="#000c33"/><rect x="157.07" y="170.12" width="5.42" height="5.42" fill="#000a28"/><rect x="163.59" y="170.12" width="5.42" height="5.42" fill="#380b00"/><rect x="170.12" y="170.12" width="5.42" height="5.42" fill="#00030d"/><rect x="176.64" y="170.12" width="5.42" height="5.42" fill="#00061a"/><rect x="183.16" y="170.12" width="5.42" height="5.42" fill="#e62e00"/><rect x="189.68" y="170.12" width="5.42" height="5.42" fill="#000000"/><rect x="196.20" y="170.12" width="5.42" height="5.42" fill="#891b00"/><rect x="202.72" y="170.12" width="5.42" height="5.42" fill="#130300"/><rect x="209.25" y="170.12" width="5.42" height="5.42" fill="#0035d5"/><rect x="215.77" y="170.12" width="5.42" height="5.42" fill="#000105"/><rect x="222.29" y="170.12" width="5.42" height="5.42" fill="#000002"/><rect x="228.81" y="170.12" width="5.42" height="5.42" fill="#561100"/><rect x="235.33" y="170.12" width="5.42" height="5.42" fill="#000412"/><rect x="241.85" y="170.12" width="5.42" height="5.42" fill="#330a00"/><rect x="248.38" y="170.12" width="5.42" height="5.42" fill="#020000"/><rect x="254.90" y="170.12" width="5.42" height="5.42" fill="#001247"/><rect x="261.42" y="170.12" width="5.42" height="5.42" fill="#911d00"/><rect x="267.94" y="170.12" width="5.42" height="5.42" fill="#00279e"/><rect x="274.46" y="170.12" width="5.42" height="5.42" fill="#731700"/><rect x="280.98" y="170.12" width="5.42" height="5.42" fill="#001963"/><rect x="287.51" y="170.12" width="5.42" height="5.42" fill="#003df3"/><rect x="294.03" y="170.12" width="5.42" height="5.42" fill="#001450"/><rect x="0.55" y="176.64" width="5.42" height="5.42" fill="#501000"/><rect x="7.07" y="176.64" width="5.42" height="5.42" fill="#f33000"/><rect x="13.59" y="176.64" width="5.42" height="5.42" fill="#003cef"/><rect x="20.12" y="176.64" width="5.42" height="5.42" fill="#000000"/><rect x="26.64" y="176.64" width="5.42" height="5.42" fill="#000000"/><rect x="33.16" y="176.64" width="5.42" height="5.42" fill="#641400"/><rect x="39.68" y="176.64" width="5.42" height="5.42" fill="#00165a"/><rect x="46.20" y="176.64" width="5.42" height="5.42" fill="#000000"/><rect x="52.72" y="176.64" width="5.42" height="5.42" fill="#000412"/><rect x="59.25" y="176.64" width="5.42" height="5.42" fill="#7b1800"/><rect x="65.77" y="176.64" width="5.42" height="5.42" fill="#000c31"/><rect x="72.29" y="176.64" width="5.42" height="5.42" fill="#d42a00"/><rect x="78.81" y="176.64" width="5.42" height="5.42" fill="#000927"/><rect x="85.33" y="176.64" width="5.42" height="5.42" fill="#001248"/><rect x="91.85" y="176.64" width="5.42" height="5.42" fill="#300900"/><rect x="98.38" y="176.64" width="5.42" height="5.42" fill="#000000"/><rect x="104.90" y="176.64" width="5.42" height="5.42" fill="#00238f"/><rect x="111.42" y="176.64" width="5.42" height="5.42" fill="#180400"/><rect x="117.94" y="176.64" width="5.42" height="5.42" fill="#0029a7"/><rect x="124.46" y="176.64" width="5.42" height="5.42" fill="#5f1300"/><rect x="130.98" y="176.64" width="5.42" height="5.42" fill="#2f0900"/><rect x="137.51" y="176.64" width="5.42" height="5.42" fill="#5e1200"/><rect x="144.03" y="176.64" width="5.42" height="5.42" fill="#160400"/><rect x="150.55" y="176.64" width="5.42" height="5.42" fill="#000410"/><rect x="157.07" y="176.64" width="5.42" height="5.42" fill="#000106"/><rect x="163.59" y="176.64" width="5.42" height="5.42" fill="#000107"/><rect x="170.12" y="176.64" width="5.42" height="5.42" fill="#a72100"/><rect x="176.64" y="176.64" width="5.42" height="5.42" fill="#0028a2"/><rect x="183.16" y="176.64" width="5.42" height="5.42" fill="#a52100"/><rect x="189.68" y="176.64" width="5.42" height="5.42" fill="#0036da"/><rect x="196.20" y="176.64" width="5.42" height="5.42" fill="#00134d"/><rect x="202.72" y="176.64" width="5.42" height="5.42" fill="#000c30"/><rect x="209.25" y="176.64" width="5.42" height="5.42" fill="#af2300"/><rect x="215.77" y="176.64" width="5.42" height="5.42" fill="#000000"/><rect x="222.29" y="176.64" width="5.42" height="5.42" fill="#00020a"/><rect x="228.81" y="176.64" width="5.42" height="5.42" fill="#a22000"/><rect x="235.33" y="176.64" width="5.42" height="5.42" fill="#000f3e"/><rect x="241.85" y="176.64" width="5.42" height="5.42" fill="#000000"/><rect x="248.38" y="176.64" width="5.42" height="5.42" fill="#020000"/><rect x="254.90" y="176.64" width="5.42" height="5.42" fill="#4c0f00"/><rect x="261.42" y="176.64" width="5.42" height="5.42" fill="#4b0f00"/><rect x="267.94" y="176.64" width="5.42" height="5.42" fill="#1b0500"/><rect x="274.46" y="176.64" width="5.42" height="5.42" fill="#000412"/><rect x="280.98" y="176.64" width="5.42" height="5.42" fill="#000618"/><rect x="287.51" y="176.64" width="5.42" height="5.42" fill="#001b6d"/><rect x="294.03" y="176.64" width="5.42" height="5.42" fill="#831a00"/><rect x="0.55" y="183.16" width="5.42" height="5.42" fill="#210600"/><rect x="7.07" y="183.16" width="5.42" height="5.42" fill="#450d00"/><rect x="13.59" y="183.16" width="5.42" height="5.42" fill="#001964"/><rect x="20.12" y="183.16" width="5.42" height="5.42" fill="#000002"/><rect x="26.64" y="183.16" width="5.42" height="5.42" fill="#561100"/><rect x="33.16" y="183.16" width="5.42" height="5.42" fill="#090100"/><rect x="39.68" y="183.16" width="5.42" height="5.42" fill="#002082"/><rect x="46.20" y="183.16" width="5.42" height="5.42" fill="#000000"/><rect x="52.72" y="183.16" width="5.42" height="5.42" fill="#a32000"/><rect x="59.25" y="183.16" width="5.42" height="5.42" fill="#000f3c"/><rect x="65.77" y="183.16" width="5.42" height="5.42" fill="#001556"/><rect x="72.29" y="183.16" width="5.42" height="5.42" fill="#000820"/><rect x="78.81" y="183.16" width="5.42" height="5.42" fill="#320a00"/><rect x="85.33" y="183.16" width="5.42" height="5.42" fill="#841a00"/><rect x="91.85" y="183.16" width="5.42" height="5.42" fill="#001b6e"/><rect x="98.38" y="183.16" width="5.42" height="5.42" fill="#001b6d"/><rect x="104.90" y="183.16" width="5.42" height="5.42" fill="#000d37"/><rect x="111.42" y="183.16" width="5.42" height="5.42" fill="#000618"/><rect x="117.94" y="183.16" width="5.42" height="5.42" fill="#010000"/><rect x="124.46" y="183.16" width="5.42" height="5.42" fill="#001a69"/><rect x="130.98" y="183.16" width="5.42" height="5.42" fill="#000517"/><rect x="137.51" y="183.16" width="5.42" height="5.42" fill="#001657"/><rect x="144.03" y="183.16" width="5.42" height="5.42" fill="#f03000"/><rect x="150.55" y="183.16" width="5.42" height="5.42" fill="#3e0c00"/><rect x="157.07" y="183.16" width="5.42" height="5.42" fill="#002595"/><rect x="163.59" y="183.16" width="5.42" height="5.42" fill="#e42d00"/><rect x="170.12" y="183.16" width="5.42" height="5.42" fill="#002596"/><rect x="176.64" y="183.16" width="5.42" height="5.42" fill="#000209"/><rect x="183.16" y="183.16" width="5.42" height="5.42" fill="#f93100"/><rect x="189.68" y="183.16" width="5.42" height="5.42" fill="#631300"/><rect x="196.20" y="183.16" width="5.42" height="5.42" fill="#400c00"/><rect x="202.72" y="183.16" width="5.42" height="5.42" fill="#000002"/><rect x="209.25" y="183.16" width="5.42" height="5.42" fill="#001453"/><rect x="215.77" y="183.16" width="5.42" height="5.42" fill="#190500"/><rect x="222.29" y="183.16" width="5.42" height="5.42" fill="#002491"/><rect x="228.81" y="183.16" width="5.42" height="5.42" fill="#00134d"/><rect x="235.33" y="183.16" width="5.42" height="5.42" fill="#000208"/><rect x="241.85" y="183.16" width="5.42" height="5.42" fill="#0034d2"/><rect x="248.38" y="183.16" width="5.42" height="5.42" fill="#000107"/><rect x="254.90" y="183.16" width="5.42" height="5.42" fill="#611300"/><rect x="261.42" y="183.16" width="5.42" height="5.42" fill="#2e0900"/><rect x="267.94" y="183.16" width="5.42" height="5.42" fill="#000000"/><rect x="274.46" y="183.16" width="5.42" height="5.42" fill="#170400"/><rect x="280.98" y="183.16" width="5.42" height="5.42" fill="#000000"/><rect x="287.51" y="183.16" width="5.42" height="5.42" fill="#001d77"/><rect x="294.03" y="183.16" width="5.42" height="5.42" fill="#0f0300"/><rect x="0.55" y="189.68" width="5.42" height="5.42" fill="#000106"/><rect x="7.07" y="189.68" width="5.42" height="5.42" fill="#440d00"/><rect x="13.59" y="189.68" width="5.42" height="5.42" fill="#b52400"/><rect x="20.12" y="189.68" width="5.42" height="5.42" fill="#000002"/><rect x="26.64" y="189.68" width="5.42" height="5.42" fill="#080100"/><rect x="33.16" y="189.68" width="5.42" height="5.42" fill="#490e00"/><rect x="39.68" y="189.68" width="5.42" height="5.42" fill="#000003"/><rect x="46.20" y="189.68" width="5.42" height="5.42" fill="#001041"/><rect x="52.72" y="189.68" width="5.42" height="5.42" fill="#3b0b00"/><rect x="59.25" y="189.68" width="5.42" height="5.42" fill="#9f1f00"/><rect x="65.77" y="189.68" width="5.42" height="5.42" fill="#571100"/><rect x="72.29" y="189.68" width="5.42" height="5.42" fill="#310900"/><rect x="78.81" y="189.68" width="5.42" height="5.42" fill="#8a1b00"/><rect x="85.33" y="189.68" width="5.42" height="5.42" fill="#280800"/><rect x="91.85" y="189.68" width="5.42" height="5.42" fill="#1a0500"/><rect x="98.38" y="189.68" width="5.42" height="5.42" fill="#000001"/><rect x="104.90" y="189.68" width="5.42" height="5.42" fill="#00071c"/><rect x="111.42" y="189.68" width="5.42" height="5.42" fill="#160400"/><rect x="117.94" y="189.68" width="5.42" height="5.42" fill="#002699"/><rect x="124.46" y="189.68" width="5.42" height="5.42" fill="#000104"/><rect x="130.98" y="189.68" width="5.42" height="5.42" fill="#5c1200"/><rect x="137.51" y="189.68" width="5.42" height="5.42" fill="#370b00"/><rect x="144.03" y="189.68" width="5.42" height="5.42" fill="#160400"/><rect x="150.55" y="189.68" width="5.42" height="5.42" fill="#000d36"/><rect x="157.07" y="189.68" width="5.42" height="5.42" fill="#000003"/><rect x="163.59" y="189.68" width="5.42" height="5.42" fill="#000000"/><rect x="170.12" y="189.68" width="5.42" height="5.42" fill="#140400"/><rect x="176.64" y="189.68" width="5.42" height="5.42" fill="#000105"/><rect x="183.16" y="189.68" width="5.42" height="5.42" fill="#260700"/><rect x="189.68" y="189.68" width="5.42" height="5.42" fill="#c82800"/><rect x="196.20" y="189.68" width="5.42" height="5.42" fill="#00165b"/><rect x="202.72" y="189.68" width="5.42" height="5.42" fill="#1e0600"/><rect x="209.25" y="189.68" width="5.42" height="5.42" fill="#591100"/><rect x="215.77" y="189.68" width="5.42" height="5.42" fill="#000208"/><rect x="222.29" y="189.68" width="5.42" height="5.42" fill="#000000"/><rect x="228.81" y="189.68" width="5.42" height="5.42" fill="#f03000"/><rect x="235.33" y="189.68" width="5.42" height="5.42" fill="#0033ce"/><rect x="241.85" y="189.68" width="5.42" height="5.42" fill="#030000"/><rect x="248.38" y="189.68" width="5.42" height="5.42" fill="#001a69"/><rect x="254.90" y="189.68" width="5.42" height="5.42" fill="#5b1200"/><rect x="261.42" y="189.68" width="5.42" height="5.42" fill="#d12900"/><rect x="267.94" y="189.68" width="5.42" height="5.42" fill="#010000"/><rect x="274.46" y="189.68" width="5.42" height="5.42" fill="#002596"/><rect x="280.98" y="189.68" width="5.42" height="5.42" fill="#080100"/><rect x="287.51" y="189.68" width="5.42" height="5.42" fill="#030000"/><rect x="294.03" y="189.68" width="5.42" height="5.42" fill="#390b00"/><rect x="0.55" y="196.20" width="5.42" height="5.42" fill="#000000"/><rect x="7.07" y="196.20" width="5.42" height="5.42" fill="#190500"/><rect x="13.59" y="196.20" width="5.42" height="5.42" fill="#791800"/><rect x="20.12" y="196.20" width="5.42" height="5.42" fill="#010000"/><rect x="26.64" y="196.20" width="5.42" height="5.42" fill="#000105"/><rect x="33.16" y="196.20" width="5.42" height="5.42" fill="#d72b00"/><rect x="39.68" y="196.20" width="5.42" height="5.42" fill="#00124b"/><rect x="46.20" y="196.20" width="5.42" height="5.42" fill="#2a0800"/><rect x="52.72" y="196.20" width="5.42" height="5.42" fill="#000208"/><rect x="59.25" y="196.20" width="5.42" height="5.42" fill="#501000"/><rect x="65.77" y="196.20" width="5.42" height="5.42" fill="#002185"/><rect x="72.29" y="196.20" width="5.42" height="5.42" fill="#f93100"/><rect x="78.81" y="196.20" width="5.42" height="5.42" fill="#000410"/><rect x="85.33" y="196.20" width="5.42" height="5.42" fill="#002fbc"/><rect x="91.85" y="196.20" width="5.42" height="5.42" fill="#000a2b"/><rect x="98.38" y="196.20" width="5.42" height="5.42" fill="#000107"/><rect x="104.90" y="196.20" width="5.42" height="5.42" fill="#0039e6"/><rect x="111.42" y="196.20" width="5.42" height="5.42" fill="#000104"/><rect x="117.94" y="196.20" width="5.42" height="5.42" fill="#000104"/><rect x="124.46" y="196.20" width="5.42" height="5.42" fill="#300900"/><rect x="130.98" y="196.20" width="5.42" height="5.42" fill="#000411"/><rect x="137.51" y="196.20" width="5.42" height="5.42" fill="#000b2f"/><rect x="144.03" y="196.20" width="5.42" height="5.42" fill="#001043"/><rect x="150.55" y="196.20" width="5.42" height="5.42" fill="#450d00"/><rect x="157.07" y="196.20" width="5.42" height="5.42" fill="#d02900"/><rect x="163.59" y="196.20" width="5.42" height="5.42" fill="#010000"/><rect x="170.12" y="196.20" width="5.42" height="5.42" fill="#001146"/><rect x="176.64" y="196.20" width="5.42" height="5.42" fill="#671400"/><rect x="183.16" y="196.20" width="5.42" height="5.42" fill="#000208"/><rect x="189.68" y="196.20" width="5.42" height="5.42" fill="#00124a"/><rect x="196.20" y="196.20" width="5.42" height="5.42" fill="#002080"/><rect x="202.72" y="196.20" width="5.42" height="5.42" fill="#581100"/><rect x="209.25" y="196.20" width="5.42" height="5.42" fill="#6c1500"/><rect x="215.77" y="196.20" width="5.42" height="5.42" fill="#180400"/><rect x="222.29" y="196.20" width="5.42" height="5.42" fill="#000000"/><rect x="228.81" y="196.20" width="5.42" height="5.42" fill="#060100"/><rect x="235.33" y="196.20" width="5.42" height="5.42" fill="#001042"/><rect x="241.85" y="196.20" width="5.42" height="5.42" fill="#e62e00"/><rect x="248.38" y="196.20" width="5.42" height="5.42" fill="#000410"/><rect x="254.90" y="196.20" width="5.42" height="5.42" fill="#190500"/><rect x="261.42" y="196.20" width="5.42" height="5.42" fill="#721600"/><rect x="267.94" y="196.20" width="5.42" height="5.42" fill="#711600"/><rect x="274.46" y="196.20" width="5.42" height="5.42" fill="#000000"/><rect x="280.98" y="196.20" width="5.42" height="5.42" fill="#000823"/><rect x="287.51" y="196.20" width="5.42" height="5.42" fill="#040000"/><rect x="294.03" y="196.20" width="5.42" height="5.42" fill="#002183"/><rect x="0.55" y="202.72" width="5.42" height="5.42" fill="#7d1900"/><rect x="7.07" y="202.72" width="5.42" height="5.42" fill="#000410"/><rect x="13.59" y="202.72" width="5.42" height="5.42" fill="#891b00"/><rect x="20.12" y="202.72" width="5.42" height="5.42" fill="#000b2e"/><rect x="26.64" y="202.72" width="5.42" height="5.42" fill="#00020b"/><rect x="33.16" y="202.72" width="5.42" height="5.42" fill="#000d34"/><rect x="39.68" y="202.72" width="5.42" height="5.42" fill="#000003"/><rect x="46.20" y="202.72" width="5.42" height="5.42" fill="#001659"/><rect x="52.72" y="202.72" width="5.42" height="5.42" fill="#003cf1"/><rect x="59.25" y="202.72" width="5.42" height="5.42" fill="#3b0b00"/><rect x="65.77" y="202.72" width="5.42" height="5.42" fill="#000a28"/><rect x="72.29" y="202.72" width="5.42" height="5.42" fill="#000e39"/><rect x="78.81" y="202.72" width="5.42" height="5.42" fill="#000820"/><rect x="85.33" y="202.72" width="5.42" height="5.42" fill="#000000"/><rect x="91.85" y="202.72" width="5.42" height="5.42" fill="#000003"/><rect x="98.38" y="202.72" width="5.42" height="5.42" fill="#190500"/><rect x="104.90" y="202.72" width="5.42" height="5.42" fill="#200600"/><rect x="111.42" y="202.72" width="5.42" height="5.42" fill="#00030e"/><rect x="117.94" y="202.72" width="5.42" height="5.42" fill="#c62700"/><rect x="124.46" y="202.72" width="5.42" height="5.42" fill="#8b1b00"/><rect x="130.98" y="202.72" width="5.42" height="5.42" fill="#002fbc"/><rect x="137.51" y="202.72" width="5.42" height="5.42" fill="#791800"/><rect x="144.03" y="202.72" width="5.42" height="5.42" fill="#b32300"/><rect x="150.55" y="202.72" width="5.42" height="5.42" fill="#5c1200"/><rect x="157.07" y="202.72" width="5.42" height="5.42" fill="#001e78"/><rect x="163.59" y="202.72" width="5.42" height="5.42" fill="#7b1800"/><rect x="170.12" y="202.72" width="5.42" height="5.42" fill="#170400"/><rect x="176.64" y="202.72" width="5.42" height="5.42" fill="#0039e4"/><rect x="183.16" y="202.72" width="5.42" height="5.42" fill="#003ae8"/><rect x="189.68" y="202.72" width="5.42" height="5.42" fill="#db2b00"/><rect x="196.20" y="202.72" width="5.42" height="5.42" fill="#1f0600"/><rect x="202.72" y="202.72" width="5.42" height="5.42" fill="#000d36"/><rect x="209.25" y="202.72" width="5.42" height="5.42" fill="#002596"/><rect x="215.77" y="202.72" width="5.42" height="5.42" fill="#001d76"/><rect x="222.29" y="202.72" width="5.42" height="5.42" fill="#000f3e"/><rect x="228.81" y="202.72" width="5.42" height="5.42" fill="#581100"/><rect x="235.33" y="202.72" width="5.42" height="5.42" fill="#000412"/><rect x="241.85" y="202.72" width="5.42" height="5.42" fill="#001c6f"/><rect x="248.38" y="202.72" width="5.42" height="5.42" fill="#b22300"/><rect x="254.90" y="202.72" width="5.42" height="5.42" fill="#611300"/><rect x="261.42" y="202.72" width="5.42" height="5.42" fill="#001965"/><rect x="267.94" y="202.72" width="5.42" height="5.42" fill="#a72100"/><rect x="274.46" y="202.72" width="5.42" height="5.42" fill="#100300"/><rect x="280.98" y="202.72" width="5.42" height="5.42" fill="#5b1200"/><rect x="287.51" y="202.72" width="5.42" height="5.42" fill="#240700"/><rect x="294.03" y="202.72" width="5.42" height="5.42" fill="#a92100"/><rect x="0.55" y="209.25" width="5.42" height="5.42" fill="#5f1300"/><rect x="7.07" y="209.25" width="5.42" height="5.42" fill="#801900"/><rect x="13.59" y="209.25" width="5.42" height="5.42" fill="#001452"/><rect x="20.12" y="209.25" width="5.42" height="5.42" fill="#2d0900"/><rect x="26.64" y="209.25" width="5.42" height="5.42" fill="#020000"/><rect x="33.16" y="209.25" width="5.42" height="5.42" fill="#450d00"/><rect x="39.68" y="209.25" width="5.42" height="5.42" fill="#000002"/><rect x="46.20" y="209.25" width="5.42" height="5.42" fill="#a12000"/><rect x="52.72" y="209.25" width="5.42" height="5.42" fill="#050100"/><rect x="59.25" y="209.25" width="5.42" height="5.42" fill="#000c2f"/><rect x="65.77" y="209.25" width="5.42" height="5.42" fill="#000f3e"/><rect x="72.29" y="209.25" width="5.42" height="5.42" fill="#001e79"/><rect x="78.81" y="209.25" width="5.42" height="5.42" fill="#000000"/><rect x="85.33" y="209.25" width="5.42" height="5.42" fill="#002ebb"/><rect x="91.85" y="209.25" width="5.42" height="5.42" fill="#000000"/><rect x="98.38" y="209.25" width="5.42" height="5.42" fill="#001d75"/><rect x="104.90" y="209.25" width="5.42" height="5.42" fill="#000000"/><rect x="111.42" y="209.25" width="5.42" height="5.42" fill="#000000"/><rect x="117.94" y="209.25" width="5.42" height="5.42" fill="#030000"/><rect x="124.46" y="209.25" width="5.42" height="5.42" fill="#921d00"/><rect x="130.98" y="209.25" width="5.42" height="5.42" fill="#003bed"/><rect x="137.51" y="209.25" width="5.42" height="5.42" fill="#821a00"/><rect x="144.03" y="209.25" width="5.42" height="5.42" fill="#000000"/><rect x="150.55" y="209.25" width="5.42" height="5.42" fill="#060100"/><rect x="157.07" y="209.25" width="5.42" height="5.42" fill="#220600"/><rect x="163.59" y="209.25" width="5.42" height="5.42" fill="#811900"/><rect x="170.12" y="209.25" width="5.42" height="5.42" fill="#00020b"/><rect x="176.64" y="209.25" width="5.42" height="5.42" fill="#000104"/><rect x="183.16" y="209.25" width="5.42" height="5.42" fill="#e32d00"/><rect x="189.68" y="209.25" width="5.42" height="5.42" fill="#002bac"/><rect x="196.20" y="209.25" width="5.42" height="5.42" fill="#180400"/><rect x="202.72" y="209.25" width="5.42" height="5.42" fill="#180400"/><rect x="209.25" y="209.25" width="5.42" height="5.42" fill="#0036d7"/><rect x="215.77" y="209.25" width="5.42" height="5.42" fill="#100300"/><rect x="222.29" y="209.25" width="5.42" height="5.42" fill="#290800"/><rect x="228.81" y="209.25" width="5.42" height="5.42" fill="#c92800"/><rect x="235.33" y="209.25" width="5.42" height="5.42" fill="#000517"/><rect x="241.85" y="209.25" width="5.42" height="5.42" fill="#f73100"/><rect x="248.38" y="209.25" width="5.42" height="5.42" fill="#000000"/><rect x="254.90" y="209.25" width="5.42" height="5.42" fill="#000000"/><rect x="261.42" y="209.25" width="5.42" height="5.42" fill="#ac2200"/><rect x="267.94" y="209.25" width="5.42" height="5.42" fill="#0034d2"/><rect x="274.46" y="209.25" width="5.42" height="5.42" fill="#390b00"/><rect x="280.98" y="209.25" width="5.42" height="5.42" fill="#150400"/><rect x="287.51" y="209.25" width="5.42" height="5.42" fill="#000514"/><rect x="294.03" y="209.25" width="5.42" height="5.42" fill="#911d00"/><rect x="0.55" y="215.77" width="5.42" height="5.42" fill="#00030d"/><rect x="7.07" y="215.77" width="5.42" height="5.42" fill="#000000"/><rect x="13.59" y="215.77" width="5.42" height="5.42" fill="#010000"/><rect x="20.12" y="215.77" width="5.42" height="5.42" fill="#551100"/><rect x="26.64" y="215.77" width="5.42" height="5.42" fill="#00124b"/><rect x="33.16" y="215.77" width="5.42" height="5.42" fill="#000002"/><rect x="39.68" y="215.77" width="5.42" height="5.42" fill="#000003"/><rect x="46.20" y="215.77" width="5.42" height="5.42" fill="#050100"/><rect x="52.72" y="215.77" width="5.42" height="5.42" fill="#781800"/><rect x="59.25" y="215.77" width="5.42" height="5.42" fill="#000924"/><rect x="65.77" y="215.77" width="5.42" height="5.42" fill="#791800"/><rect x="72.29" y="215.77" width="5.42" height="5.42" fill="#000106"/><rect x="78.81" y="215.77" width="5.42" height="5.42" fill="#000000"/><rect x="85.33" y="215.77" width="5.42" height="5.42" fill="#000b2c"/><rect x="91.85" y="215.77" width="5.42" height="5.42" fill="#000000"/><rect x="98.38" y="215.77" width="5.42" height="5.42" fill="#f03000"/><rect x="104.90" y="215.77" width="5.42" height="5.42" fill="#1e0600"/><rect x="111.42" y="215.77" width="5.42" height="5.42" fill="#611300"/><rect x="117.94" y="215.77" width="5.42" height="5.42" fill="#000517"/><rect x="124.46" y="215.77" width="5.42" height="5.42" fill="#00061b"/><rect x="130.98" y="215.77" width="5.42" height="5.42" fill="#000821"/><rect x="137.51" y="215.77" width="5.42" height="5.42" fill="#0b0200"/><rect x="144.03" y="215.77" width="5.42" height="5.42" fill="#180400"/><rect x="150.55" y="215.77" width="5.42" height="5.42" fill="#5d1200"/><rect x="157.07" y="215.77" width="5.42" height="5.42" fill="#0033cc"/><rect x="163.59" y="215.77" width="5.42" height="5.42" fill="#3b0b00"/><rect x="170.12" y="215.77" width="5.42" height="5.42" fill="#a32000"/><rect x="176.64" y="215.77" width="5.42" height="5.42" fill="#030000"/><rect x="183.16" y="215.77" width="5.42" height="5.42" fill="#0031c3"/><rect x="189.68" y="215.77" width="5.42" height="5.42" fill="#000821"/><rect x="196.20" y="215.77" width="5.42" height="5.42" fill="#003bed"/><rect x="202.72" y="215.77" width="5.42" height="5.42" fill="#001557"/><rect x="209.25" y="215.77" width="5.42" height="5.42" fill="#c02600"/><rect x="215.77" y="215.77" width="5.42" height="5.42" fill="#100300"/><rect x="222.29" y="215.77" width="5.42" height="5.42" fill="#200600"/><rect x="228.81" y="215.77" width="5.42" height="5.42" fill="#601300"/><rect x="235.33" y="215.77" width="5.42" height="5.42" fill="#b62400"/><rect x="241.85" y="215.77" width="5.42" height="5.42" fill="#110300"/><rect x="248.38" y="215.77" width="5.42" height="5.42" fill="#120300"/><rect x="254.90" y="215.77" width="5.42" height="5.42" fill="#150400"/><rect x="261.42" y="215.77" width="5.42" height="5.42" fill="#2f0900"/><rect x="267.94" y="215.77" width="5.42" height="5.42" fill="#0d0200"/><rect x="274.46" y="215.77" width="5.42" height="5.42" fill="#280800"/><rect x="280.98" y="215.77" width="5.42" height="5.42" fill="#00124a"/><rect x="287.51" y="215.77" width="5.42" height="5.42" fill="#230700"/><rect x="294.03" y="215.77" width="5.42" height="5.42" fill="#000000"/><rect x="0.55" y="222.29" width="5.42" height="5.42" fill="#501000"/><rect x="7.07" y="222.29" width="5.42" height="5.42" fill="#002596"/><rect x="13.59" y="222.29" width="5.42" height="5.42" fill="#00175c"/><rect x="20.12" y="222.29" width="5.42" height="5.42" fill="#0034cf"/><rect x="26.64" y="222.29" width="5.42" height="5.42" fill="#571100"/><rect x="33.16" y="222.29" width="5.42" height="5.42" fill="#ba2500"/><rect x="39.68" y="222.29" width="5.42" height="5.42" fill="#1f0600"/><rect x="46.20" y="222.29" width="5.42" height="5.42" fill="#00030c"/><rect x="52.72" y="222.29" width="5.42" height="5.42" fill="#751700"/><rect x="59.25" y="222.29" width="5.42" height="5.42" fill="#5e1200"/><rect x="65.77" y="222.29" width="5.42" height="5.42" fill="#060100"/><rect x="72.29" y="222.29" width="5.42" height="5.42" fill="#000c32"/><rect x="78.81" y="222.29" width="5.42" height="5.42" fill="#000820"/><rect x="85.33" y="222.29" width="5.42" height="5.42" fill="#000003"/><rect x="91.85" y="222.29" width="5.42" height="5.42" fill="#00061a"/><rect x="98.38" y="222.29" width="5.42" height="5.42" fill="#000002"/><rect x="104.90" y="222.29" width="5.42" height="5.42" fill="#1a0500"/><rect x="111.42" y="222.29" width="5.42" height="5.42" fill="#cb2800"/><rect x="117.94" y="222.29" width="5.42" height="5.42" fill="#002fbe"/><rect x="124.46" y="222.29" width="5.42" height="5.42" fill="#070100"/><rect x="130.98" y="222.29" width="5.42" height="5.42" fill="#0033cc"/><rect x="137.51" y="222.29" width="5.42" height="5.42" fill="#002288"/><rect x="144.03" y="222.29" width="5.42" height="5.42" fill="#6d1500"/><rect x="150.55" y="222.29" width="5.42" height="5.42" fill="#080100"/><rect x="157.07" y="222.29" width="5.42" height="5.42" fill="#be2600"/><rect x="163.59" y="222.29" width="5.42" height="5.42" fill="#000001"/><rect x="170.12" y="222.29" width="5.42" height="5.42" fill="#0039e5"/><rect x="176.64" y="222.29" width="5.42" height="5.42" fill="#000209"/><rect x="183.16" y="222.29" width="5.42" height="5.42" fill="#0c0200"/><rect x="189.68" y="222.29" width="5.42" height="5.42" fill="#ce2900"/><rect x="196.20" y="222.29" width="5.42" height="5.42" fill="#f63100"/><rect x="202.72" y="222.29" width="5.42" height="5.42" fill="#000000"/><rect x="209.25" y="222.29" width="5.42" height="5.42" fill="#000105"/><rect x="215.77" y="222.29" width="5.42" height="5.42" fill="#002595"/><rect x="222.29" y="222.29" width="5.42" height="5.42" fill="#1b0500"/><rect x="228.81" y="222.29" width="5.42" height="5.42" fill="#00124a"/><rect x="235.33" y="222.29" width="5.42" height="5.42" fill="#001c70"/><rect x="241.85" y="222.29" width="5.42" height="5.42" fill="#0039e4"/><rect x="248.38" y="222.29" width="5.42" height="5.42" fill="#003cef"/><rect x="254.90" y="222.29" width="5.42" height="5.42" fill="#2a0800"/><rect x="261.42" y="222.29" width="5.42" height="5.42" fill="#002186"/><rect x="267.94" y="222.29" width="5.42" height="5.42" fill="#e82e00"/><rect x="274.46" y="222.29" width="5.42" height="5.42" fill="#0028a1"/><rect x="280.98" y="222.29" width="5.42" height="5.42" fill="#971e00"/><rect x="287.51" y="222.29" width="5.42" height="5.42" fill="#002080"/><rect x="294.03" y="222.29" width="5.42" height="5.42" fill="#0038e2"/><rect x="0.55" y="228.81" width="5.42" height="5.42" fill="#3a0b00"/><rect x="7.07" y="228.81" width="5.42" height="5.42" fill="#000e3a"/><rect x="13.59" y="228.81" width="5.42" height="5.42" fill="#410d00"/><rect x="20.12" y="228.81" width="5.42" height="5.42" fill="#001658"/><rect x="26.64" y="228.81" width="5.42" height="5.42" fill="#0030c2"/><rect x="33.16" y="228.81" width="5.42" height="5.42" fill="#571100"/><rect x="39.68" y="228.81" width="5.42" height="5.42" fill="#370b00"/><rect x="46.20" y="228.81" width="5.42" height="5.42" fill="#8c1c00"/><rect x="52.72" y="228.81" width="5.42" height="5.42" fill="#3f0c00"/><rect x="59.25" y="228.81" width="5.42" height="5.42" fill="#0029a4"/><rect x="65.77" y="228.81" width="5.42" height="5.42" fill="#160400"/><rect x="72.29" y="228.81" width="5.42" height="5.42" fill="#350a00"/><rect x="78.81" y="228.81" width="5.42" height="5.42" fill="#000000"/><rect x="85.33" y="228.81" width="5.42" height="5.42" fill="#ca2800"/><rect x="91.85" y="228.81" width="5.42" height="5.42" fill="#000d34"/><rect x="98.38" y="228.81" width="5.42" height="5.42" fill="#e62e00"/><rect x="104.90" y="228.81" width="5.42" height="5.42" fill="#380b00"/><rect x="111.42" y="228.81" width="5.42" height="5.42" fill="#003ae8"/><rect x="117.94" y="228.81" width="5.42" height="5.42" fill="#0039e5"/><rect x="124.46" y="228.81" width="5.42" height="5.42" fill="#1d0500"/><rect x="130.98" y="228.81" width="5.42" height="5.42" fill="#721600"/><rect x="137.51" y="228.81" width="5.42" height="5.42" fill="#002aa8"/><rect x="144.03" y="228.81" width="5.42" height="5.42" fill="#00071d"/><rect x="150.55" y="228.81" width="5.42" height="5.42" fill="#3e0c00"/><rect x="157.07" y="228.81" width="5.42" height="5.42" fill="#001966"/><rect x="163.59" y="228.81" width="5.42" height="5.42" fill="#901c00"/><rect x="170.12" y="228.81" width="5.42" height="5.42" fill="#000000"/><rect x="176.64" y="228.81" width="5.42" height="5.42" fill="#002eb9"/><rect x="183.16" y="228.81" width="5.42" height="5.42" fill="#00030d"/><rect x="189.68" y="228.81" width="5.42" height="5.42" fill="#080100"/><rect x="196.20" y="228.81" width="5.42" height="5.42" fill="#000002"/><rect x="202.72" y="228.81" width="5.42" height="5.42" fill="#270700"/><rect x="209.25" y="228.81" width="5.42" height="5.42" fill="#001d75"/><rect x="215.77" y="228.81" width="5.42" height="5.42" fill="#651400"/><rect x="222.29" y="228.81" width="5.42" height="5.42" fill="#00030e"/><rect x="228.81" y="228.81" width="5.42" height="5.42" fill="#1b0500"/><rect x="235.33" y="228.81" width="5.42" height="5.42" fill="#160400"/><rect x="241.85" y="228.81" width="5.42" height="5.42" fill="#000104"/><rect x="248.38" y="228.81" width="5.42" height="5.42" fill="#000209"/><rect x="254.90" y="228.81" width="5.42" height="5.42" fill="#5e1200"/><rect x="261.42" y="228.81" width="5.42" height="5.42" fill="#d52a00"/><rect x="267.94" y="228.81" width="5.42" height="5.42" fill="#5d1200"/><rect x="274.46" y="228.81" width="5.42" height="5.42" fill="#070100"/><rect x="280.98" y="228.81" width="5.42" height="5.42" fill="#000924"/><rect x="287.51" y="228.81" width="5.42" height="5.42" fill="#002eb9"/><rect x="294.03" y="228.81" width="5.42" height="5.42" fill="#ef2f00"/><rect x="0.55" y="235.33" width="5.42" height="5.42" fill="#320a00"/><rect x="7.07" y="235.33" width="5.42" height="5.42" fill="#781800"/><rect x="13.59" y="235.33" width="5.42" height="5.42" fill="#000516"/><rect x="20.12" y="235.33" width="5.42" height="5.42" fill="#0f0300"/><rect x="26.64" y="235.33" width="5.42" height="5.42" fill="#f23000"/><rect x="33.16" y="235.33" width="5.42" height="5.42" fill="#7b1800"/><rect x="39.68" y="235.33" width="5.42" height="5.42" fill="#0e0200"/><rect x="46.20" y="235.33" width="5.42" height="5.42" fill="#00071e"/><rect x="52.72" y="235.33" width="5.42" height="5.42" fill="#000003"/><rect x="59.25" y="235.33" width="5.42" height="5.42" fill="#a52100"/><rect x="65.77" y="235.33" width="5.42" height="5.42" fill="#00020b"/><rect x="72.29" y="235.33" width="5.42" height="5.42" fill="#2a0800"/><rect x="78.81" y="235.33" width="5.42" height="5.42" fill="#0e0200"/><rect x="85.33" y="235.33" width="5.42" height="5.42" fill="#ab2200"/><rect x="91.85" y="235.33" width="5.42" height="5.42" fill="#6b1500"/><rect x="98.38" y="235.33" width="5.42" height="5.42" fill="#000a27"/><rect x="104.90" y="235.33" width="5.42" height="5.42" fill="#003cf2"/><rect x="111.42" y="235.33" width="5.42" height="5.42" fill="#000c30"/><rect x="117.94" y="235.33" width="5.42" height="5.42" fill="#000003"/><rect x="124.46" y="235.33" width="5.42" height="5.42" fill="#0b0200"/><rect x="130.98" y="235.33" width="5.42" height="5.42" fill="#711600"/><rect x="137.51" y="235.33" width="5.42" height="5.42" fill="#a42000"/><rect x="144.03" y="235.33" width="5.42" height="5.42" fill="#0032ca"/><rect x="150.55" y="235.33" width="5.42" height="5.42" fill="#7c1800"/><rect x="157.07" y="235.33" width="5.42" height="5.42" fill="#6e1600"/><rect x="163.59" y="235.33" width="5.42" height="5.42" fill="#951d00"/><rect x="170.12" y="235.33" width="5.42" height="5.42" fill="#080100"/><rect x="176.64" y="235.33" width="5.42" height="5.42" fill="#000a2b"/><rect x="183.16" y="235.33" width="5.42" height="5.42" fill="#891b00"/><rect x="189.68" y="235.33" width="5.42" height="5.42" fill="#6b1500"/><rect x="196.20" y="235.33" width="5.42" height="5.42" fill="#2a0800"/><rect x="202.72" y="235.33" width="5.42" height="5.42" fill="#ba2500"/><rect x="209.25" y="235.33" width="5.42" height="5.42" fill="#000412"/><rect x="215.77" y="235.33" width="5.42" height="5.42" fill="#0029a3"/><rect x="222.29" y="235.33" width="5.42" height="5.42" fill="#050100"/><rect x="228.81" y="235.33" width="5.42" height="5.42" fill="#651400"/><rect x="235.33" y="235.33" width="5.42" height="5.42" fill="#001450"/><rect x="241.85" y="235.33" width="5.42" height="5.42" fill="#490e00"/><rect x="248.38" y="235.33" width="5.42" height="5.42" fill="#c92800"/><rect x="254.90" y="235.33" width="5.42" height="5.42" fill="#000f3e"/><rect x="261.42" y="235.33" width="5.42" height="5.42" fill="#100300"/><rect x="267.94" y="235.33" width="5.42" height="5.42" fill="#270700"/><rect x="274.46" y="235.33" width="5.42" height="5.42" fill="#000000"/><rect x="280.98" y="235.33" width="5.42" height="5.42" fill="#00134d"/><rect x="287.51" y="235.33" width="5.42" height="5.42" fill="#000d34"/><rect x="294.03" y="235.33" width="5.42" height="5.42" fill="#4a0e00"/><rect x="0.55" y="241.85" width="5.42" height="5.42" fill="#611300"/><rect x="7.07" y="241.85" width="5.42" height="5.42" fill="#000000"/><rect x="13.59" y="241.85" width="5.42" height="5.42" fill="#0028a1"/><rect x="20.12" y="241.85" width="5.42" height="5.42" fill="#6b1500"/><rect x="26.64" y="241.85" width="5.42" height="5.42" fill="#551100"/><rect x="33.16" y="241.85" width="5.42" height="5.42" fill="#000f3f"/><rect x="39.68" y="241.85" width="5.42" height="5.42" fill="#090100"/><rect x="46.20" y="241.85" width="5.42" height="5.42" fill="#ac2200"/><rect x="52.72" y="241.85" width="5.42" height="5.42" fill="#a32000"/><rect x="59.25" y="241.85" width="5.42" height="5.42" fill="#010000"/><rect x="65.77" y="241.85" width="5.42" height="5.42" fill="#000000"/><rect x="72.29" y="241.85" width="5.42" height="5.42" fill="#0b0200"/><rect x="78.81" y="241.85" width="5.42" height="5.42" fill="#001657"/><rect x="85.33" y="241.85" width="5.42" height="5.42" fill="#001555"/><rect x="91.85" y="241.85" width="5.42" height="5.42" fill="#00175d"/><rect x="98.38" y="241.85" width="5.42" height="5.42" fill="#310900"/><rect x="104.90" y="241.85" width="5.42" height="5.42" fill="#00030e"/><rect x="111.42" y="241.85" width="5.42" height="5.42" fill="#060100"/><rect x="117.94" y="241.85" width="5.42" height="5.42" fill="#000106"/><rect x="124.46" y="241.85" width="5.42" height="5.42" fill="#010000"/><rect x="130.98" y="241.85" width="5.42" height="5.42" fill="#001c72"/><rect x="137.51" y="241.85" width="5.42" height="5.42" fill="#0032c8"/><rect x="144.03" y="241.85" width="5.42" height="5.42" fill="#ff3300"/><rect x="150.55" y="241.85" width="5.42" height="5.42" fill="#00020b"/><rect x="157.07" y="241.85" width="5.42" height="5.42" fill="#002492"/><rect x="163.59" y="241.85" width="5.42" height="5.42" fill="#170400"/><rect x="170.12" y="241.85" width="5.42" height="5.42" fill="#5e1200"/><rect x="176.64" y="241.85" width="5.42" height="5.42" fill="#001b6d"/><rect x="183.16" y="241.85" width="5.42" height="5.42" fill="#0d0200"/><rect x="189.68" y="241.85" width="5.42" height="5.42" fill="#000412"/><rect x="196.20" y="241.85" width="5.42" height="5.42" fill="#010000"/><rect x="202.72" y="241.85" width="5.42" height="5.42" fill="#0038df"/><rect x="209.25" y="241.85" width="5.42" height="5.42" fill="#0034d2"/><rect x="215.77" y="241.85" width="5.42" height="5.42" fill="#ff3300"/><rect x="222.29" y="241.85" width="5.42" height="5.42" fill="#941d00"/><rect x="228.81" y="241.85" width="5.42" height="5.42" fill="#000000"/><rect x="235.33" y="241.85" width="5.42" height="5.42" fill="#070100"/><rect x="241.85" y="241.85" width="5.42" height="5.42" fill="#000c31"/><rect x="248.38" y="241.85" width="5.42" height="5.42" fill="#5a1200"/><rect x="254.90" y="241.85" width="5.42" height="5.42" fill="#000003"/><rect x="261.42" y="241.85" width="5.42" height="5.42" fill="#d62a00"/><rect x="267.94" y="241.85" width="5.42" height="5.42" fill="#531000"/><rect x="274.46" y="241.85" width="5.42" height="5.42" fill="#731700"/><rect x="280.98" y="241.85" width="5.42" height="5.42" fill="#e52d00"/><rect x="287.51" y="241.85" width="5.42" height="5.42" fill="#000d34"/><rect x="294.03" y="241.85" width="5.42" height="5.42" fill="#0033ce"/><rect x="0.55" y="248.38" width="5.42" height="5.42" fill="#001450"/><rect x="7.07" y="248.38" width="5.42" height="5.42" fill="#00175c"/><rect x="13.59" y="248.38" width="5.42" height="5.42" fill="#0029a4"/><rect x="20.12" y="248.38" width="5.42" height="5.42" fill="#0030c2"/><rect x="26.64" y="248.38" width="5.42" height="5.42" fill="#050100"/><rect x="33.16" y="248.38" width="5.42" height="5.42" fill="#971e00"/><rect x="39.68" y="248.38" width="5.42" height="5.42" fill="#000000"/><rect x="46.20" y="248.38" width="5.42" height="5.42" fill="#d72b00"/><rect x="52.72" y="248.38" width="5.42" height="5.42" fill="#b72400"/><rect x="59.25" y="248.38" width="5.42" height="5.42" fill="#002db5"/><rect x="65.77" y="248.38" width="5.42" height="5.42" fill="#0d0200"/><rect x="72.29" y="248.38" width="5.42" height="5.42" fill="#000107"/><rect x="78.81" y="248.38" width="5.42" height="5.42" fill="#002287"/><rect x="85.33" y="248.38" width="5.42" height="5.42" fill="#e22d00"/><rect x="91.85" y="248.38" width="5.42" height="5.42" fill="#000c33"/><rect x="98.38" y="248.38" width="5.42" height="5.42" fill="#060100"/><rect x="104.90" y="248.38" width="5.42" height="5.42" fill="#1a0500"/><rect x="111.42" y="248.38" width="5.42" height="5.42" fill="#df2c00"/><rect x="117.94" y="248.38" width="5.42" height="5.42" fill="#240700"/><rect x="124.46" y="248.38" width="5.42" height="5.42" fill="#000208"/><rect x="130.98" y="248.38" width="5.42" height="5.42" fill="#000001"/><rect x="137.51" y="248.38" width="5.42" height="5.42" fill="#001a6a"/><rect x="144.03" y="248.38" width="5.42" height="5.42" fill="#e82e00"/><rect x="150.55" y="248.38" width="5.42" height="5.42" fill="#ff3300"/><rect x="157.07" y="248.38" width="5.42" height="5.42" fill="#001144"/><rect x="163.59" y="248.38" width="5.42" height="5.42" fill="#0033cd"/><rect x="170.12" y="248.38" width="5.42" height="5.42" fill="#000d33"/><rect x="176.64" y="248.38" width="5.42" height="5.42" fill="#000411"/><rect x="183.16" y="248.38" width="5.42" height="5.42" fill="#b12300"/><rect x="189.68" y="248.38" width="5.42" height="5.42" fill="#b22300"/><rect x="196.20" y="248.38" width="5.42" height="5.42" fill="#7f1900"/><rect x="202.72" y="248.38" width="5.42" height="5.42" fill="#0031c5"/><rect x="209.25" y="248.38" width="5.42" height="5.42" fill="#5e1200"/><rect x="215.77" y="248.38" width="5.42" height="5.42" fill="#350a00"/><rect x="222.29" y="248.38" width="5.42" height="5.42" fill="#1c0500"/><rect x="228.81" y="248.38" width="5.42" height="5.42" fill="#fa3200"/><rect x="235.33" y="248.38" width="5.42" height="5.42" fill="#002fbd"/><rect x="241.85" y="248.38" width="5.42" height="5.42" fill="#001d75"/><rect x="248.38" y="248.38" width="5.42" height="5.42" fill="#4c0f00"/><rect x="254.90" y="248.38" width="5.42" height="5.42" fill="#d02900"/><rect x="261.42" y="248.38" width="5.42" height="5.42" fill="#270700"/><rect x="267.94" y="248.38" width="5.42" height="5.42" fill="#000821"/><rect x="274.46" y="248.38" width="5.42" height="5.42" fill="#0c0200"/><rect x="280.98" y="248.38" width="5.42" height="5.42" fill="#4d0f00"/><rect x="287.51" y="248.38" width="5.42" height="5.42" fill="#002492"/><rect x="294.03" y="248.38" width="5.42" height="5.42" fill="#000619"/><rect x="0.55" y="254.90" width="5.42" height="5.42" fill="#000c33"/><rect x="7.07" y="254.90" width="5.42" height="5.42" fill="#002184"/><rect x="13.59" y="254.90" width="5.42" height="5.42" fill="#000000"/><rect x="20.12" y="254.90" width="5.42" height="5.42" fill="#001964"/><rect x="26.64" y="254.90" width="5.42" height="5.42" fill="#000f3c"/><rect x="33.16" y="254.90" width="5.42" height="5.42" fill="#001d76"/><rect x="39.68" y="254.90" width="5.42" height="5.42" fill="#270700"/><rect x="46.20" y="254.90" width="5.42" height="5.42" fill="#003ae7"/><rect x="52.72" y="254.90" width="5.42" height="5.42" fill="#380b00"/><rect x="59.25" y="254.90" width="5.42" height="5.42" fill="#001554"/><rect x="65.77" y="254.90" width="5.42" height="5.42" fill="#0034d0"/><rect x="72.29" y="254.90" width="5.42" height="5.42" fill="#c62700"/><rect x="78.81" y="254.90" width="5.42" height="5.42" fill="#001145"/><rect x="85.33" y="254.90" width="5.42" height="5.42" fill="#cb2800"/><rect x="91.85" y="254.90" width="5.42" height="5.42" fill="#941d00"/><rect x="98.38" y="254.90" width="5.42" height="5.42" fill="#a52100"/><rect x="104.90" y="254.90" width="5.42" height="5.42" fill="#001e78"/><rect x="111.42" y="254.90" width="5.42" height="5.42" fill="#000001"/><rect x="117.94" y="254.90" width="5.42" height="5.42" fill="#002699"/><rect x="124.46" y="254.90" width="5.42" height="5.42" fill="#c62700"/><rect x="130.98" y="254.90" width="5.42" height="5.42" fill="#831a00"/><rect x="137.51" y="254.90" width="5.42" height="5.42" fill="#160400"/><rect x="144.03" y="254.90" width="5.42" height="5.42" fill="#000001"/><rect x="150.55" y="254.90" width="5.42" height="5.42" fill="#000514"/><rect x="157.07" y="254.90" width="5.42" height="5.42" fill="#751700"/><rect x="163.59" y="254.90" width="5.42" height="5.42" fill="#000000"/><rect x="170.12" y="254.90" width="5.42" height="5.42" fill="#160400"/><rect x="176.64" y="254.90" width="5.42" height="5.42" fill="#001d76"/><rect x="183.16" y="254.90" width="5.42" height="5.42" fill="#001145"/><rect x="189.68" y="254.90" width="5.42" height="5.42" fill="#002fbc"/><rect x="196.20" y="254.90" width="5.42" height="5.42" fill="#370b00"/><rect x="202.72" y="254.90" width="5.42" height="5.42" fill="#050100"/><rect x="209.25" y="254.90" width="5.42" height="5.42" fill="#001d75"/><rect x="215.77" y="254.90" width="5.42" height="5.42" fill="#971e00"/><rect x="222.29" y="254.90" width="5.42" height="5.42" fill="#000b2f"/><rect x="228.81" y="254.90" width="5.42" height="5.42" fill="#000105"/><rect x="235.33" y="254.90" width="5.42" height="5.42" fill="#001b6d"/><rect x="241.85" y="254.90" width="5.42" height="5.42" fill="#000b2c"/><rect x="248.38" y="254.90" width="5.42" height="5.42" fill="#811900"/><rect x="254.90" y="254.90" width="5.42" height="5.42" fill="#000515"/><rect x="261.42" y="254.90" width="5.42" height="5.42" fill="#001965"/><rect x="267.94" y="254.90" width="5.42" height="5.42" fill="#000000"/><rect x="274.46" y="254.90" width="5.42" height="5.42" fill="#00061b"/><rect x="280.98" y="254.90" width="5.42" height="5.42" fill="#b12300"/><rect x="287.51" y="254.90" width="5.42" height="5.42" fill="#00238c"/><rect x="294.03" y="254.90" width="5.42" height="5.42" fill="#f43000"/><rect x="0.55" y="261.42" width="5.42" height="5.42" fill="#002fbc"/><rect x="7.07" y="261.42" width="5.42" height="5.42" fill="#aa2200"/><rect x="13.59" y="261.42" width="5.42" height="5.42" fill="#230700"/><rect x="20.12" y="261.42" width="5.42" height="5.42" fill="#00124a"/><rect x="26.64" y="261.42" width="5.42" height="5.42" fill="#000000"/><rect x="33.16" y="261.42" width="5.42" height="5.42" fill="#000926"/><rect x="39.68" y="261.42" width="5.42" height="5.42" fill="#000c32"/><rect x="46.20" y="261.42" width="5.42" height="5.42" fill="#001450"/><rect x="52.72" y="261.42" width="5.42" height="5.42" fill="#00030e"/><rect x="59.25" y="261.42" width="5.42" height="5.42" fill="#ff3300"/><rect x="65.77" y="261.42" width="5.42" height="5.42" fill="#ff3300"/><rect x="72.29" y="261.42" width="5.42" height="5.42" fill="#c32700"/><rect x="78.81" y="261.42" width="5.42" height="5.42" fill="#002699"/><rect x="85.33" y="261.42" width="5.42" height="5.42" fill="#000925"/><rect x="91.85" y="261.42" width="5.42" height="5.42" fill="#ab2200"/><rect x="98.38" y="261.42" width="5.42" height="5.42" fill="#002fbc"/><rect x="104.90" y="261.42" width="5.42" height="5.42" fill="#3d0c00"/><rect x="111.42" y="261.42" width="5.42" height="5.42" fill="#000923"/><rect x="117.94" y="261.42" width="5.42" height="5.42" fill="#f43000"/><rect x="124.46" y="261.42" width="5.42" height="5.42" fill="#0039e3"/><rect x="130.98" y="261.42" width="5.42" height="5.42" fill="#6b1500"/><rect x="137.51" y="261.42" width="5.42" height="5.42" fill="#000514"/><rect x="144.03" y="261.42" width="5.42" height="5.42" fill="#001e78"/><rect x="150.55" y="261.42" width="5.42" height="5.42" fill="#003cf2"/><rect x="157.07" y="261.42" width="5.42" height="5.42" fill="#7c1800"/><rect x="163.59" y="261.42" width="5.42" height="5.42" fill="#010000"/><rect x="170.12" y="261.42" width="5.42" height="5.42" fill="#001659"/><rect x="176.64" y="261.42" width="5.42" height="5.42" fill="#000002"/><rect x="183.16" y="261.42" width="5.42" height="5.42" fill="#b82400"/><rect x="189.68" y="261.42" width="5.42" height="5.42" fill="#001146"/><rect x="196.20" y="261.42" width="5.42" height="5.42" fill="#080100"/><rect x="202.72" y="261.42" width="5.42" height="5.42" fill="#001e79"/><rect x="209.25" y="261.42" width="5.42" height="5.42" fill="#00175d"/><rect x="215.77" y="261.42" width="5.42" height="5.42" fill="#541000"/><rect x="222.29" y="261.42" width="5.42" height="5.42" fill="#360a00"/><rect x="228.81" y="261.42" width="5.42" height="5.42" fill="#001453"/><rect x="235.33" y="261.42" width="5.42" height="5.42" fill="#002aa8"/><rect x="241.85" y="261.42" width="5.42" height="5.42" fill="#0028a1"/><rect x="248.38" y="261.42" width="5.42" height="5.42" fill="#100300"/><rect x="254.90" y="261.42" width="5.42" height="5.42" fill="#000000"/><rect x="261.42" y="261.42" width="5.42" height="5.42" fill="#000a2b"/><rect x="267.94" y="261.42" width="5.42" height="5.42" fill="#00134d"/><rect x="274.46" y="261.42" width="5.42" height="5.42" fill="#110300"/><rect x="280.98" y="261.42" width="5.42" height="5.42" fill="#340a00"/><rect x="287.51" y="261.42" width="5.42" height="5.42" fill="#6e1600"/><rect x="294.03" y="261.42" width="5.42" height="5.42" fill="#0a0200"/><rect x="0.55" y="267.94" width="5.42" height="5.42" fill="#00144f"/><rect x="7.07" y="267.94" width="5.42" height="5.42" fill="#002db4"/><rect x="13.59" y="267.94" width="5.42" height="5.42" fill="#400c00"/><rect x="20.12" y="267.94" width="5.42" height="5.42" fill="#000105"/><rect x="26.64" y="267.94" width="5.42" height="5.42" fill="#3b0b00"/><rect x="33.16" y="267.94" width="5.42" height="5.42" fill="#002fbd"/><rect x="39.68" y="267.94" width="5.42" height="5.42" fill="#6d1500"/><rect x="46.20" y="267.94" width="5.42" height="5.42" fill="#000515"/><rect x="52.72" y="267.94" width="5.42" height="5.42" fill="#821a00"/><rect x="59.25" y="267.94" width="5.42" height="5.42" fill="#931d00"/><rect x="65.77" y="267.94" width="5.42" height="5.42" fill="#000000"/><rect x="72.29" y="267.94" width="5.42" height="5.42" fill="#0039e4"/><rect x="78.81" y="267.94" width="5.42" height="5.42" fill="#b72400"/><rect x="85.33" y="267.94" width="5.42" height="5.42" fill="#000000"/><rect x="91.85" y="267.94" width="5.42" height="5.42" fill="#981e00"/><rect x="98.38" y="267.94" width="5.42" height="5.42" fill="#000b2f"/><rect x="104.90" y="267.94" width="5.42" height="5.42" fill="#001659"/><rect x="111.42" y="267.94" width="5.42" height="5.42" fill="#7b1800"/><rect x="117.94" y="267.94" width="5.42" height="5.42" fill="#00030d"/><rect x="124.46" y="267.94" width="5.42" height="5.42" fill="#001a68"/><rect x="130.98" y="267.94" width="5.42" height="5.42" fill="#00030c"/><rect x="137.51" y="267.94" width="5.42" height="5.42" fill="#0d0200"/><rect x="144.03" y="267.94" width="5.42" height="5.42" fill="#003cef"/><rect x="150.55" y="267.94" width="5.42" height="5.42" fill="#010000"/><rect x="157.07" y="267.94" width="5.42" height="5.42" fill="#000001"/><rect x="163.59" y="267.94" width="5.42" height="5.42" fill="#000000"/><rect x="170.12" y="267.94" width="5.42" height="5.42" fill="#002186"/><rect x="176.64" y="267.94" width="5.42" height="5.42" fill="#370b00"/><rect x="183.16" y="267.94" width="5.42" height="5.42" fill="#711600"/><rect x="189.68" y="267.94" width="5.42" height="5.42" fill="#931d00"/><rect x="196.20" y="267.94" width="5.42" height="5.42" fill="#00061a"/><rect x="202.72" y="267.94" width="5.42" height="5.42" fill="#360a00"/><rect x="209.25" y="267.94" width="5.42" height="5.42" fill="#00020a"/><rect x="215.77" y="267.94" width="5.42" height="5.42" fill="#4a0e00"/><rect x="222.29" y="267.94" width="5.42" height="5.42" fill="#002eb8"/><rect x="228.81" y="267.94" width="5.42" height="5.42" fill="#991e00"/><rect x="235.33" y="267.94" width="5.42" height="5.42" fill="#dd2c00"/><rect x="241.85" y="267.94" width="5.42" height="5.42" fill="#000000"/><rect x="248.38" y="267.94" width="5.42" height="5.42" fill="#000000"/><rect x="254.90" y="267.94" width="5.42" height="5.42" fill="#020000"/><rect x="261.42" y="267.94" width="5.42" height="5.42" fill="#020000"/><rect x="267.94" y="267.94" width="5.42" height="5.42" fill="#0038df"/><rect x="274.46" y="267.94" width="5.42" height="5.42" fill="#e92e00"/><rect x="280.98" y="267.94" width="5.42" height="5.42" fill="#001143"/><rect x="287.51" y="267.94" width="5.42" height="5.42" fill="#00175b"/><rect x="294.03" y="267.94" width="5.42" height="5.42" fill="#002595"/><rect x="0.55" y="274.46" width="5.42" height="5.42" fill="#000d36"/><rect x="7.07" y="274.46" width="5.42" height="5.42" fill="#711600"/><rect x="13.59" y="274.46" width="5.42" height="5.42" fill="#0035d5"/><rect x="20.12" y="274.46" width="5.42" height="5.42" fill="#00269a"/><rect x="26.64" y="274.46" width="5.42" height="5.42" fill="#300900"/><rect x="33.16" y="274.46" width="5.42" height="5.42" fill="#001554"/><rect x="39.68" y="274.46" width="5.42" height="5.42" fill="#0038e2"/><rect x="46.20" y="274.46" width="5.42" height="5.42" fill="#0e0200"/><rect x="52.72" y="274.46" width="5.42" height="5.42" fill="#090100"/><rect x="59.25" y="274.46" width="5.42" height="5.42" fill="#010000"/><rect x="65.77" y="274.46" width="5.42" height="5.42" fill="#320a00"/><rect x="72.29" y="274.46" width="5.42" height="5.42" fill="#002595"/><rect x="78.81" y="274.46" width="5.42" height="5.42" fill="#971e00"/><rect x="85.33" y="274.46" width="5.42" height="5.42" fill="#380b00"/><rect x="91.85" y="274.46" width="5.42" height="5.42" fill="#0032c7"/><rect x="98.38" y="274.46" width="5.42" height="5.42" fill="#002185"/><rect x="104.90" y="274.46" width="5.42" height="5.42" fill="#000000"/><rect x="111.42" y="274.46" width="5.42" height="5.42" fill="#000000"/><rect x="117.94" y="274.46" width="5.42" height="5.42" fill="#000a29"/><rect x="124.46" y="274.46" width="5.42" height="5.42" fill="#002185"/><rect x="130.98" y="274.46" width="5.42" height="5.42" fill="#000106"/><rect x="137.51" y="274.46" width="5.42" height="5.42" fill="#001e7a"/><rect x="144.03" y="274.46" width="5.42" height="5.42" fill="#0c0200"/><rect x="150.55" y="274.46" width="5.42" height="5.42" fill="#901c00"/><rect x="157.07" y="274.46" width="5.42" height="5.42" fill="#001c73"/><rect x="163.59" y="274.46" width="5.42" height="5.42" fill="#080100"/><rect x="170.12" y="274.46" width="5.42" height="5.42" fill="#470e00"/><rect x="176.64" y="274.46" width="5.42" height="5.42" fill="#001a67"/><rect x="183.16" y="274.46" width="5.42" height="5.42" fill="#771700"/><rect x="189.68" y="274.46" width="5.42" height="5.42" fill="#ce2900"/><rect x="196.20" y="274.46" width="5.42" height="5.42" fill="#000208"/><rect x="202.72" y="274.46" width="5.42" height="5.42" fill="#000104"/><rect x="209.25" y="274.46" width="5.42" height="5.42" fill="#811900"/><rect x="215.77" y="274.46" width="5.42" height="5.42" fill="#010000"/><rect x="222.29" y="274.46" width="5.42" height="5.42" fill="#000107"/><rect x="228.81" y="274.46" width="5.42" height="5.42" fill="#d12900"/><rect x="235.33" y="274.46" width="5.42" height="5.42" fill="#581100"/><rect x="241.85" y="274.46" width="5.42" height="5.42" fill="#000514"/><rect x="248.38" y="274.46" width="5.42" height="5.42" fill="#000e3b"/><rect x="254.90" y="274.46" width="5.42" height="5.42" fill="#000515"/><rect x="261.42" y="274.46" width="5.42" height="5.42" fill="#000002"/><rect x="267.94" y="274.46" width="5.42" height="5.42" fill="#f63100"/><rect x="274.46" y="274.46" width="5.42" height="5.42" fill="#691500"/><rect x="280.98" y="274.46" width="5.42" height="5.42" fill="#b92500"/><rect x="287.51" y="274.46" width="5.42" height="5.42" fill="#701600"/><rect x="294.03" y="274.46" width="5.42" height="5.42" fill="#861a00"/><rect x="0.55" y="280.98" width="5.42" height="5.42" fill="#0030bf"/><rect x="7.07" y="280.98" width="5.42" height="5.42" fill="#010000"/><rect x="13.59" y="280.98" width="5.42" height="5.42" fill="#e02c00"/><rect x="20.12" y="280.98" width="5.42" height="5.42" fill="#cb2800"/><rect x="26.64" y="280.98" width="5.42" height="5.42" fill="#000d36"/><rect x="33.16" y="280.98" width="5.42" height="5.42" fill="#000003"/><rect x="39.68" y="280.98" width="5.42" height="5.42" fill="#170400"/><rect x="46.20" y="280.98" width="5.42" height="5.42" fill="#00030e"/><rect x="52.72" y="280.98" width="5.42" height="5.42" fill="#020000"/><rect x="59.25" y="280.98" width="5.42" height="5.42" fill="#002cb1"/><rect x="65.77" y="280.98" width="5.42" height="5.42" fill="#000002"/><rect x="72.29" y="280.98" width="5.42" height="5.42" fill="#000000"/><rect x="78.81" y="280.98" width="5.42" height="5.42" fill="#0037df"/><rect x="85.33" y="280.98" width="5.42" height="5.42" fill="#001e79"/><rect x="91.85" y="280.98" width="5.42" height="5.42" fill="#eb2f00"/><rect x="98.38" y="280.98" width="5.42" height="5.42" fill="#581100"/><rect x="104.90" y="280.98" width="5.42" height="5.42" fill="#ce2900"/><rect x="111.42" y="280.98" width="5.42" height="5.42" fill="#170400"/><rect x="117.94" y="280.98" width="5.42" height="5.42" fill="#6c1500"/><rect x="124.46" y="280.98" width="5.42" height="5.42" fill="#a22000"/><rect x="130.98" y="280.98" width="5.42" height="5.42" fill="#a22000"/><rect x="137.51" y="280.98" width="5.42" height="5.42" fill="#0034d1"/><rect x="144.03" y="280.98" width="5.42" height="5.42" fill="#1a0500"/><rect x="150.55" y="280.98" width="5.42" height="5.42" fill="#000b2f"/><rect x="157.07" y="280.98" width="5.42" height="5.42" fill="#270700"/><rect x="163.59" y="280.98" width="5.42" height="5.42" fill="#000b2b"/><rect x="170.12" y="280.98" width="5.42" height="5.42" fill="#030000"/><rect x="176.64" y="280.98" width="5.42" height="5.42" fill="#c32700"/><rect x="183.16" y="280.98" width="5.42" height="5.42" fill="#140400"/><rect x="189.68" y="280.98" width="5.42" height="5.42" fill="#000d36"/><rect x="196.20" y="280.98" width="5.42" height="5.42" fill="#010000"/><rect x="202.72" y="280.98" width="5.42" height="5.42" fill="#000002"/><rect x="209.25" y="280.98" width="5.42" height="5.42" fill="#da2b00"/><rect x="215.77" y="280.98" width="5.42" height="5.42" fill="#000926"/><rect x="222.29" y="280.98" width="5.42" height="5.42" fill="#00071f"/><rect x="228.81" y="280.98" width="5.42" height="5.42" fill="#1c0500"/><rect x="235.33" y="280.98" width="5.42" height="5.42" fill="#002187"/><rect x="241.85" y="280.98" width="5.42" height="5.42" fill="#0c0200"/><rect x="248.38" y="280.98" width="5.42" height="5.42" fill="#df2c00"/><rect x="254.90" y="280.98" width="5.42" height="5.42" fill="#000000"/><rect x="261.42" y="280.98" width="5.42" height="5.42" fill="#000b2e"/><rect x="267.94" y="280.98" width="5.42" height="5.42" fill="#000000"/><rect x="274.46" y="280.98" width="5.42" height="5.42" fill="#020000"/><rect x="280.98" y="280.98" width="5.42" height="5.42" fill="#001c72"/><rect x="287.51" y="280.98" width="5.42" height="5.42" fill="#002184"/><rect x="294.03" y="280.98" width="5.42" height="5.42" fill="#001f7e"/><rect x="0.55" y="287.51" width="5.42" height="5.42" fill="#000823"/><rect x="7.07" y="287.51" width="5.42" height="5.42" fill="#000105"/><rect x="13.59" y="287.51" width="5.42" height="5.42" fill="#000925"/><rect x="20.12" y="287.51" width="5.42" height="5.42" fill="#000e39"/><rect x="26.64" y="287.51" width="5.42" height="5.42" fill="#0028a1"/><rect x="33.16" y="287.51" width="5.42" height="5.42" fill="#040000"/><rect x="39.68" y="287.51" width="5.42" height="5.42" fill="#811900"/><rect x="46.20" y="287.51" width="5.42" height="5.42" fill="#100300"/><rect x="52.72" y="287.51" width="5.42" height="5.42" fill="#070100"/><rect x="59.25" y="287.51" width="5.42" height="5.42" fill="#1d0500"/><rect x="65.77" y="287.51" width="5.42" height="5.42" fill="#001450"/><rect x="72.29" y="287.51" width="5.42" height="5.42" fill="#350a00"/><rect x="78.81" y="287.51" width="5.42" height="5.42" fill="#000000"/><rect x="85.33" y="287.51" width="5.42" height="5.42" fill="#040000"/><rect x="91.85" y="287.51" width="5.42" height="5.42" fill="#110300"/><rect x="98.38" y="287.51" width="5.42" height="5.42" fill="#000000"/><rect x="104.90" y="287.51" width="5.42" height="5.42" fill="#00071d"/><rect x="111.42" y="287.51" width="5.42" height="5.42" fill="#000e3a"/><rect x="117.94" y="287.51" width="5.42" height="5.42" fill="#001145"/><rect x="124.46" y="287.51" width="5.42" height="5.42" fill="#000000"/><rect x="130.98" y="287.51" width="5.42" height="5.42" fill="#000209"/><rect x="137.51" y="287.51" width="5.42" height="5.42" fill="#0b0200"/><rect x="144.03" y="287.51" width="5.42" height="5.42" fill="#003ae8"/><rect x="150.55" y="287.51" width="5.42" height="5.42" fill="#000410"/><rect x="157.07" y="287.51" width="5.42" height="5.42" fill="#911d00"/><rect x="163.59" y="287.51" width="5.42" height="5.42" fill="#000f3c"/><rect x="170.12" y="287.51" width="5.42" height="5.42" fill="#050100"/><rect x="176.64" y="287.51" width="5.42" height="5.42" fill="#000000"/><rect x="183.16" y="287.51" width="5.42" height="5.42" fill="#000927"/><rect x="189.68" y="287.51" width="5.42" height="5.42" fill="#fc3200"/><rect x="196.20" y="287.51" width="5.42" height="5.42" fill="#000823"/><rect x="202.72" y="287.51" width="5.42" height="5.42" fill="#551100"/><rect x="209.25" y="287.51" width="5.42" height="5.42" fill="#001a6b"/><rect x="215.77" y="287.51" width="5.42" height="5.42" fill="#002db3"/><rect x="222.29" y="287.51" width="5.42" height="5.42" fill="#981e00"/><rect x="228.81" y="287.51" width="5.42" height="5.42" fill="#000002"/><rect x="235.33" y="287.51" width="5.42" height="5.42" fill="#002eb7"/><rect x="241.85" y="287.51" width="5.42" height="5.42" fill="#000209"/><rect x="248.38" y="287.51" width="5.42" height="5.42" fill="#000002"/><rect x="254.90" y="287.51" width="5.42" height="5.42" fill="#410d00"/><rect x="261.42" y="287.51" width="5.42" height="5.42" fill="#00248f"/><rect x="267.94" y="287.51" width="5.42" height="5.42" fill="#001043"/><rect x="274.46" y="287.51" width="5.42" height="5.42" fill="#e22d00"/><rect x="280.98" y="287.51" width="5.42" height="5.42" fill="#430d00"/><rect x="287.51" y="287.51" width="5.42" height="5.42" fill="#001b6e"/><rect x="294.03" y="287.51" width="5.42" height="5.42" fill="#000515"/><rect x="0.55" y="294.03" width="5.42" height="5.42" fill="#000410"/><rect x="7.07" y="294.03" width="5.42" height="5.42" fill="#260700"/><rect x="13.59" y="294.03" width="5.42" height="5.42" fill="#120300"/><rect x="20.12" y="294.03" width="5.42" height="5.42" fill="#881b00"/><rect x="26.64" y="294.03" width="5.42" height="5.42" fill="#741700"/><rect x="33.16" y="294.03" width="5.42" height="5.42" fill="#010000"/><rect x="39.68" y="294.03" width="5.42" height="5.42" fill="#430d00"/><rect x="46.20" y="294.03" width="5.42" height="5.42" fill="#460e00"/><rect x="52.72" y="294.03" width="5.42" height="5.42" fill="#4e0f00"/><rect x="59.25" y="294.03" width="5.42" height="5.42" fill="#000000"/><rect x="65.77" y="294.03" width="5.42" height="5.42" fill="#5d1200"/><rect x="72.29" y="294.03" width="5.42" height="5.42" fill="#340a00"/><rect x="78.81" y="294.03" width="5.42" height="5.42" fill="#bb2500"/><rect x="85.33" y="294.03" width="5.42" height="5.42" fill="#002081"/><rect x="91.85" y="294.03" width="5.42" height="5.42" fill="#981e00"/><rect x="98.38" y="294.03" width="5.42" height="5.42" fill="#003cef"/><rect x="104.90" y="294.03" width="5.42" height="5.42" fill="#521000"/><rect x="111.42" y="294.03" width="5.42" height="5.42" fill="#0b0200"/><rect x="117.94" y="294.03" width="5.42" height="5.42" fill="#000000"/><rect x="124.46" y="294.03" width="5.42" height="5.42" fill="#e52d00"/><rect x="130.98" y="294.03" width="5.42" height="5.42" fill="#080100"/><rect x="137.51" y="294.03" width="5.42" height="5.42" fill="#000104"/><rect x="144.03" y="294.03" width="5.42" height="5.42" fill="#5c1200"/><rect x="150.55" y="294.03" width="5.42" height="5.42" fill="#991e00"/></svg></div>
<div class="card" style="top:799.4px;height:300px"></div>
<div class="lbl" style="left:45.0px;top:824.7px;font-size:17.85px">Attention Heads</div>
<div style="left:45.0px;top:841.9px;width:300px;height:200px;background:#000;border-radius:5px;overflow:hidden"><svg width="300" height="200" style="position:absolute;left:0;top:0"><line x1="21.43" y1="0" x2="21.43" y2="200" stroke="#181818" stroke-width="1.2"/><line x1="42.86" y1="0" x2="42.86" y2="200" stroke="#181818" stroke-width="1.2"/><line x1="64.29" y1="0" x2="64.29" y2="200" stroke="#181818" stroke-width="1.2"/><line x1="85.71" y1="0" x2="85.71" y2="200" stroke="#181818" stroke-width="1.2"/><line x1="107.14" y1="0" x2="107.14" y2="200" stroke="#181818" stroke-width="1.2"/><line x1="128.57" y1="0" x2="128.57" y2="200" stroke="#181818" stroke-width="1.2"/><line x1="150.00" y1="0" x2="150.00" y2="200" stroke="#181818" stroke-width="1.2"/><line x1="171.43" y1="0" x2="171.43" y2="200" stroke="#181818" stroke-width="1.2"/><line x1="192.86" y1="0" x2="192.86" y2="200" stroke="#181818" stroke-width="1.2"/><line x1="214.29" y1="0" x2="214.29" y2="200" stroke="#181818" stroke-width="1.2"/><line x1="235.71" y1="0" x2="235.71" y2="200" stroke="#181818" stroke-width="1.2"/><line x1="257.14" y1="0" x2="257.14" y2="200" stroke="#181818" stroke-width="1.2"/><line x1="278.57" y1="0" x2="278.57" y2="200" stroke="#181818" stroke-width="1.2"/><line x1="0" y1="9.20" x2="300" y2="9.20" stroke="#181818" stroke-width="1.2"/><line x1="0" y1="18.40" x2="300" y2="18.40" stroke="#181818" stroke-width="1.2"/><line x1="0" y1="27.60" x2="300" y2="27.60" stroke="#181818" stroke-width="1.2"/><line x1="0" y1="36.80" x2="300" y2="36.80" stroke="#181818" stroke-width="1.2"/><line x1="0" y1="46.00" x2="300" y2="46.00" stroke="#181818" stroke-width="1.2"/><line x1="0" y1="55.20" x2="300" y2="55.20" stroke="#181818" stroke-width="1.2"/><line x1="0" y1="64.40" x2="300" y2="64.40" stroke="#181818" stroke-width="1.2"/><line x1="0" y1="73.60" x2="300" y2="73.60" stroke="#181818" stroke-width="1.2"/><line x1="0" y1="82.80" x2="300" y2="82.80" stroke="#181818" stroke-width="1.2"/><line x1="0" y1="92.00" x2="300" y2="92.00" stroke="#181818" stroke-width="1.2"/><line x1="0" y1="101.20" x2="300" y2="101.20" stroke="#181818" stroke-width="1.2"/><line x1="0" y1="110.40" x2="300" y2="110.40" stroke="#181818" stroke-width="1.2"/><line x1="0" y1="119.60" x2="300" y2="119.60" stroke="#181818" stroke-width="1.2"/><line x1="0" y1="128.80" x2="300" y2="128.80" stroke="#181818" stroke-width="1.2"/><line x1="0" y1="138.00" x2="300" y2="138.00" stroke="#181818" stroke-width="1.2"/><line x1="0" y1="147.20" x2="300" y2="147.20" stroke="#181818" stroke-width="1.2"/><line x1="0" y1="156.40" x2="300" y2="156.40" stroke="#181818" stroke-width="1.2"/><line x1="0" y1="165.60" x2="300" y2="165.60" stroke="#181818" stroke-width="1.2"/><line x1="0" y1="174.80" x2="300" y2="174.80" stroke="#181818" stroke-width="1.2"/><line x1="0" y1="184.00" x2="300" y2="184.00" stroke="#181818" stroke-width="1.2"/><line x1="0" y1="193.20" x2="300" y2="193.20" stroke="#181818" stroke-width="1.2"/><rect x="214.89" y="0.3" width="20.23" height="8.4" fill="#f5f55a"/></svg></div>
</div>
<svg id="wm" width="1080" height="720" style="position:absolute;left:0;top:0">
<defs><filter id="gl" x="-10%" y="-50%" width="120%" height="200%"><feGaussianBlur stdDeviation="0.7" result="b"/><feMerge><feMergeNode in="b"/><feMergeNode in="SourceGraphic"/></feMerge></filter></defs>
<g filter="url(#gl)" stroke="#b4b4b4" stroke-width="1.7" stroke-linejoin="round">
<polygon points="865.5,27.6 868.5,24 957,24 955.5,27.6" fill="#000"/>
<polygon points="956,9.2 959.5,4.6 1076,4.6 1072.5,9.2" fill="#000"/>
</g>
<g font-family="Liberation Sans" font-style="italic" font-size="18.6" stroke-linejoin="round">
<g filter="url(#gl)" stroke="#b8b8b8" stroke-width="3" fill="#b8b8b8" font-weight="bold">
<text x="873.5" y="22" textLength="74" lengthAdjust="spacingAndGlyphs">STEFFES</text>
<text x="956.5" y="23.6" textLength="107" lengthAdjust="spacingAndGlyphs">INDUSTRIES</text>
</g>
<g fill="#000" stroke="#000" stroke-width="0.8" font-weight="bold">
<text x="873.5" y="22" textLength="74" lengthAdjust="spacingAndGlyphs">STEFFES</text>
<text x="956.5" y="23.6" textLength="107" lengthAdjust="spacingAndGlyphs">INDUSTRIES</text>
</g>
<g fill="#a0a0a0" font-weight="normal">
<text x="873.5" y="22" textLength="74" lengthAdjust="spacingAndGlyphs">STEFFES</text>
<text x="956.5" y="23.6" textLength="107" lengthAdjust="spacingAndGlyphs">INDUSTRIES</text>
</g></g>
</svg>
</body></html>
